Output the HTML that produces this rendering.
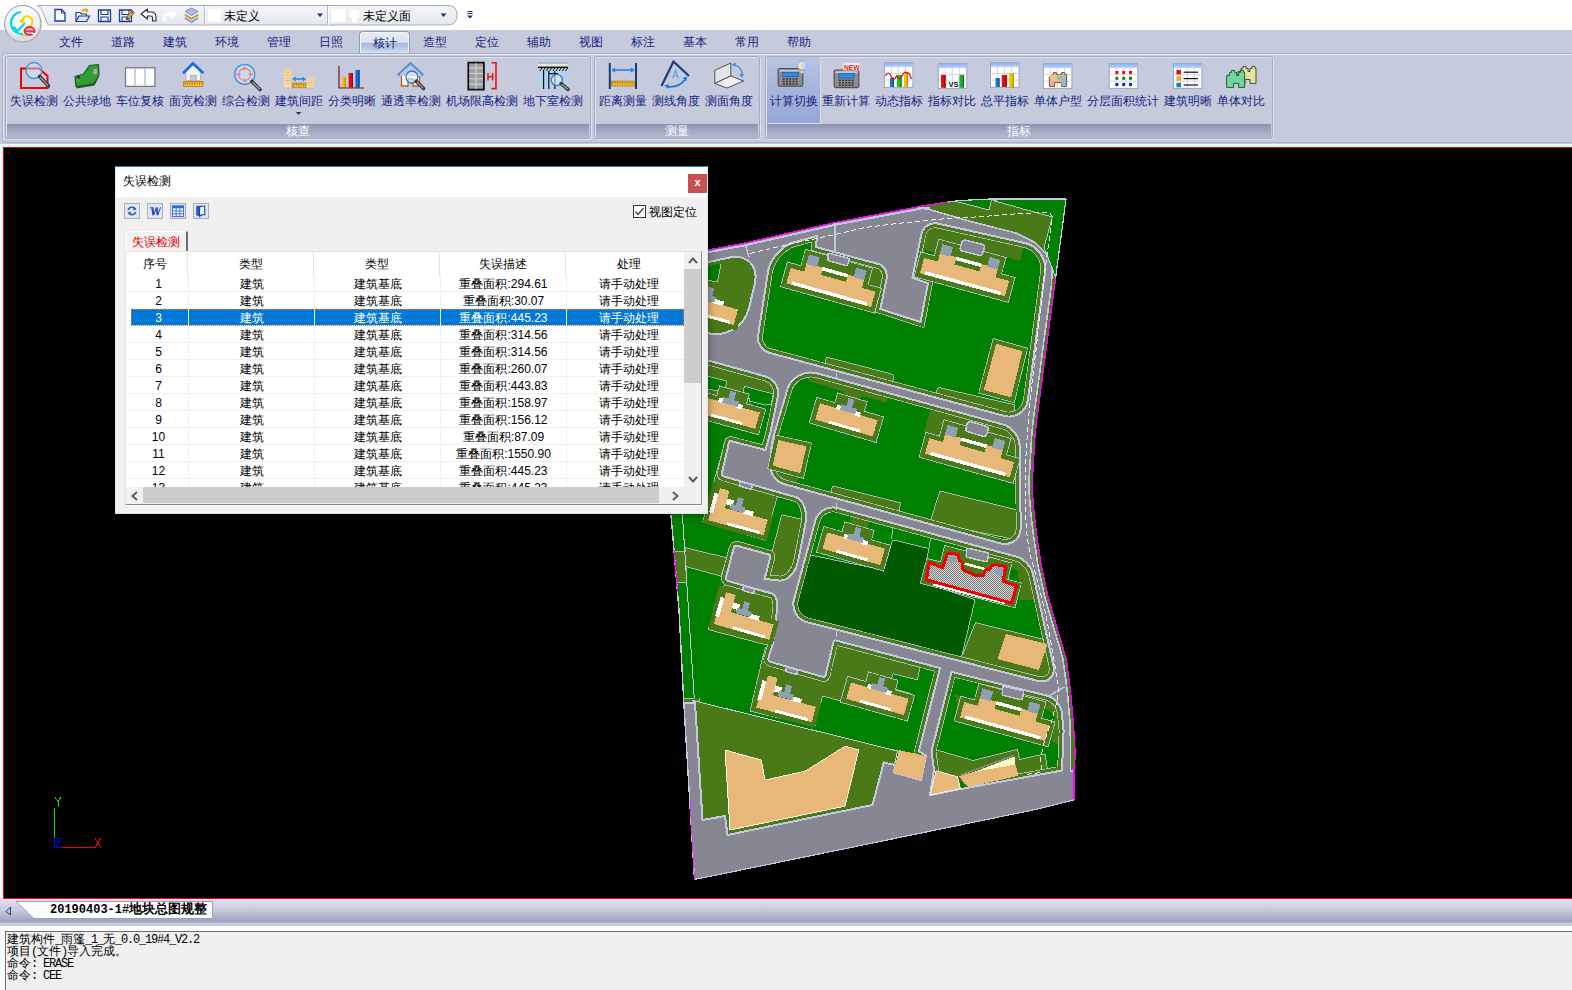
<!DOCTYPE html>
<html lang="zh">
<head>
<meta charset="utf-8">
<title>失误检测</title>
<style>
*{box-sizing:border-box;margin:0;padding:0}
html,body{width:1572px;height:990px;overflow:hidden;background:#fff}
body{font-family:"Liberation Sans",sans-serif;font-size:12px;color:#000;position:relative}
.abs{position:absolute}
/* top */
#titlebar{left:0;top:0;width:1572px;height:30px;background:#fff}
#tabrow{left:0;top:30px;width:1572px;height:23px;background:#c5cbdd}
#ribbon{left:0;top:53px;width:1572px;height:91px;background:#c5cbdd}
#ribbon-frame{left:2px;top:53px;width:1570px;height:90px;border:1px solid #aab0c4;border-right:none;border-radius:4px 0 0 4px;box-shadow:inset 1px 1px 0 #e3e6f0}
#ribbon-bottom{left:0;top:144px;width:1572px;height:2px;background:#f4f5f9}
.tab{position:absolute;top:31px;height:22px;width:52px;text-align:center;line-height:22px;font-size:12px;color:#141e7c}
.tab.on{border:1px solid #8e9cc0;border-bottom:none;border-radius:4px 4px 0 0;background:linear-gradient(#e6ebf5 0%,#dde3f0 48%,#a8b7da 54%,#b9cde8 80%,#cde3f3 100%);width:51px;box-shadow:inset 1px 1px 0 #f3f5fb,inset -1px 0 0 #f3f5fb}
.grp{position:absolute;top:56px;height:83px;border:1px solid #a6adc3;border-radius:3px;box-shadow:inset 1px 1px 0 #dde1ed,1px 1px 0 #dde1ed}
.grp .ttl{position:absolute;left:1px;right:1px;bottom:0;height:14px;background:linear-gradient(#8a94b2,#a3abc5 55%,#b4bbd0);color:#fff;font-size:12px;line-height:14px;text-align:center}
.btn{position:absolute;top:1px;height:66px;text-align:center;color:#141e7c;font-size:12px}
.btn svg{position:absolute;left:50%;top:3px;margin-left:-17px;width:34px;height:34px}
.btn span{position:absolute;left:-19px;right:-21px;top:36px;line-height:14px;white-space:nowrap}
.btn.hot{background:linear-gradient(#b8c3e3,#95a7d5);box-shadow:1px 1px 0 #d4dbef}
/* canvas */
#canvas{left:2px;top:146px;width:1570px;height:754px;background:#000;border:1px solid #fff;border-right:none}
#canvas-red{left:3px;top:147px;width:1569px;height:752px;border:1px solid #f00;border-right:none}
/* bottom */
#docstrip{left:0;top:900px;width:1572px;height:22px;background:linear-gradient(#dfe1ee,#c8cadd 45%,#9c9fbc)}
#docstrip2{left:0;top:922px;width:1572px;height:4px;background:#c5cbdd;border-top:1px solid #b3b8cc}
#gap{left:0;top:926px;width:1572px;height:5px;background:#fff}
#cmdbg{left:0;top:931px;width:6px;height:59px;background:#fafafa}#cmd{left:5px;top:931px;width:1567px;height:59px;background:#f0f0f0;border-top:1px solid #6e6e6e;border-left:1px solid #6e6e6e}
#cmd div{position:absolute;left:1px;font-family:"Liberation Mono",monospace;font-size:12px;line-height:12px;white-space:pre}#cmd .a{letter-spacing:-1.2px}
/* dialog */
#dlg{left:115px;top:166px;width:593px;height:348px;background:#f0f0f0;border:1px solid #e2e2e2;border-top:1px solid #1883d7;box-shadow:0 1px 9px rgba(0,0,0,.45)}
#dlg-title{left:0;top:0;width:591px;height:30px;background:#fff;font-size:12px;line-height:29px;padding-left:7px}
#dlg-x{left:572px;top:7px;width:19px;height:19px;background:#c75050;color:#fff;font-size:11px;font-weight:bold;line-height:17px;text-align:center}
.tb{position:absolute;top:36px;width:16px;height:16px;background:#dfe6f4;border:1px solid #adadad}.tb svg{position:absolute;left:0;top:0}
#list{left:9px;top:84px;width:577px;height:254px;background:#fff;border:1px solid #828790;border-left-color:#e3e3e3;border-top-color:#e3e3e3;overflow:hidden;box-shadow:1px 1px 0 #fff}
.row{position:absolute;left:0;width:558px;height:17px;border-bottom:1px solid #f0f0f0;font-size:12px;line-height:19px}
.row i{position:absolute;top:0;font-style:normal;text-align:center;height:17px}
.row.sel{background:#0078d7;color:#fff;left:5px;width:553px;outline:1px dotted #e08020;outline-offset:-1px}
</style>
</head>
<body>
<div id="titlebar" class="abs"></div>
<div id="tabrow" class="abs"></div>
<div id="ribbon" class="abs"></div>
<div id="ribbon-frame" class="abs"></div>
<div id="ribbon-bottom" class="abs"></div>
<svg class="abs" style="left:0;top:0" width="490" height="50" viewBox="0 0 490 50">
<defs><linearGradient id="qg" x1="0" y1="0" x2="0" y2="1"><stop offset="0" stop-color="#f4f5f9"/><stop offset="1" stop-color="#e6e8f0"/></linearGradient><radialGradient id="ab" cx=".45" cy=".3" r=".8"><stop offset="0" stop-color="#ffffff"/><stop offset=".6" stop-color="#f2f2f4"/><stop offset="1" stop-color="#c9c9d2"/></radialGradient></defs>
<path d="M37 5.5 H448 Q457 5.5 457 15.2 Q457 25 448 25 H48 Q45 18 42 10 Q40 6 37 5.5Z" fill="url(#qg)" stroke="#a7abbb" stroke-width="1"/>
<circle cx="23" cy="24" r="19" fill="#b9bccb" opacity=".55"/>
<circle cx="22.8" cy="23.6" r="18.2" fill="url(#ab)" stroke="#9a9aa6" stroke-width="1"/>
<path d="M5.5 27 A17.5 17.5 0 0 0 40 27 A17.5 12 0 0 1 5.5 27Z" fill="#dcdce4" opacity=".8"/>
<path d="M21 12 A11 11 0 1 0 23 34" fill="none" stroke="#00d8e8" stroke-width="2.2"/>
<path d="M13.5 26.5 L17.5 31 L25 23" fill="none" stroke="#00d8e8" stroke-width="2.2"/>
<path d="M22.5 20 C24 15.5 29 15 31.5 18.5 C33.5 22 32 26 29 27.5" fill="none" stroke="#f0d800" stroke-width="2"/>
<path d="M18.5 21 L24.5 17.5 L24.5 24.5Z" fill="#f0d800"/>
<path d="M21 35.5 H28" stroke="#e0c800" stroke-width="1.4"/>
<ellipse cx="29.5" cy="31" rx="5" ry="4" fill="#f4c0c8" stroke="#e03050" stroke-width="2"/><path d="M25 31.3 H34" stroke="#e03050" stroke-width="1.6"/><path d="M31 33 L36 33 L35 36Z" fill="#f2f2f4"/>
<path d="M55 9.5 H61.5 L65 13 V21 H55Z" fill="#f6f8fd" stroke="#1c3f94" stroke-width="1.3"/><path d="M61.5 9.5 V13 H65" fill="none" stroke="#1c3f94" stroke-width="1"/>
<path d="M76 21.5 V12.5 H80 L81.5 14 H86.5 V16" fill="#f0f4fc" stroke="#1c3f94" stroke-width="1.2"/><path d="M76 21.5 L79 16 H89.5 L86.5 21.5Z" fill="#dfe8f8" stroke="#1c3f94" stroke-width="1.2"/><path d="M82 11.5 Q85 8 88 10.5" fill="none" stroke="#e8a000" stroke-width="1.6"/><path d="M86 9 L89 11.5 L85.5 12.5Z" fill="#e8a000"/>
<path d="M98.5 10 H110.5 V21.5 H98.5Z" fill="#f4f7fd" stroke="#1c3f94" stroke-width="1.3"/><path d="M101.0 10 V14.5 H108.0 V10" fill="none" stroke="#1c3f94" stroke-width="1.1"/><path d="M101.0 21.5 V17 H108.0 V21.5" fill="none" stroke="#1c3f94" stroke-width="1.1"/>
<path d="M119.5 10 H131.5 V21.5 H119.5Z" fill="#f4f7fd" stroke="#1c3f94" stroke-width="1.3"/><path d="M122.0 10 V14.5 H129.0 V10" fill="none" stroke="#1c3f94" stroke-width="1.1"/><path d="M122.0 21.5 V17 H129.0 V21.5" fill="none" stroke="#1c3f94" stroke-width="1.1"/>
<path d="M126 20 L127 16.5 L132.5 10.5 L134.5 12.5 L129 18.5Z" fill="#f0b020" stroke="#7a4a10" stroke-width=".7"/><path d="M126 20 L127 17 L128.8 18.6Z" fill="#333"/><path d="M131.5 11.5 L133.5 13.5" stroke="#c03030" stroke-width="1.2"/>
<path d="M141 14 L147.5 9 V12 H151 Q156 12 156 17 V21 H152.5 V18 Q152.5 16 150.5 16 H147.5 V19Z" fill="#fff" stroke="#2a2a2a" stroke-width="1.1" stroke-linejoin="round"/>
<path d="M177.5 14 L171 9 V12 H167.5 Q162.5 12 162.5 17 V21 H166 V18 Q166 16 168 16 H171 V19Z" fill="#fdfdfe" stroke="#f4f5f9" stroke-width="1" stroke-linejoin="round"/>
<path d="M191.5 8 L198 11.5 L191.5 15.5 L185 11.5Z" fill="#a8c0e8" stroke="#5f7fb8" stroke-width=".8"/>
<path d="M185 14.2 L191.5 18 L198 14.2 L198 15.5 L191.5 19.6 L185 15.5Z" fill="#e8a030" stroke="#b87818" stroke-width=".6"/>
<path d="M185 17.6 L191.5 21.4 L198 17.6 L198 18.6 L191.5 22.8 L185 18.6Z" fill="#8aa4d8" stroke="#5f7fb8" stroke-width=".6"/>
<path d="M204.5 6 V25 M327.5 6 V25" stroke="#b4b8c8" stroke-width="1"/><path d="M205.5 6 V25 M328.5 6 V25" stroke="#fff" stroke-width="1"/>
<rect x="208" y="9" width="12.5" height="13" fill="#fff"/><rect x="331.5" y="9" width="14" height="13" fill="#fff"/>
<path d="M354.5 9 A5 5 0 0 1 357 18.5 V22 H352 V18.5 A5 5 0 0 1 354.5 9Z" fill="#fff"/>
<path d="M317 13.5 H323 L320 17Z" fill="#1c2f80"/><path d="M440.5 13.5 H446.5 L443.5 17Z" fill="#1c2f80"/>
<path d="M467.5 11.5 H472.5 M467.5 13.5 H472.5" stroke="#1c2f80" stroke-width="1"/><path d="M467 15.5 H473 L470 18.5Z" fill="#1c2f80"/>
</svg>
<div class="abs" style="left:224px;top:8px;font-size:12px;line-height:16px">未定义</div>
<div class="abs" style="left:363px;top:8px;font-size:12px;line-height:16px">未定义面</div>
<div class="tab" style="left:45px">文件</div>
<div class="tab" style="left:97px">道路</div>
<div class="tab" style="left:149px">建筑</div>
<div class="tab" style="left:201px">环境</div>
<div class="tab" style="left:253px">管理</div>
<div class="tab" style="left:305px">日照</div>
<div class="tab on" style="left:359px">核计</div>
<div class="tab" style="left:409px">造型</div>
<div class="tab" style="left:461px">定位</div>
<div class="tab" style="left:513px">辅助</div>
<div class="tab" style="left:565px">视图</div>
<div class="tab" style="left:617px">标注</div>
<div class="tab" style="left:669px">基本</div>
<div class="tab" style="left:721px">常用</div>
<div class="tab" style="left:773px">帮助</div>
<div class="grp" style="left:5px;width:586px">
<div class="btn" style="left:2px;width:50px"><svg viewBox="0 0 34 34"></svg><span>失误检测</span></div>
<div class="btn" style="left:55px;width:50px"><svg viewBox="0 0 34 34"></svg><span>公共绿地</span></div>
<div class="btn" style="left:108px;width:50px"><svg viewBox="0 0 34 34"></svg><span>车位复核</span></div>
<div class="btn" style="left:161px;width:50px"><svg viewBox="0 0 34 34"></svg><span>面宽检测</span></div>
<div class="btn" style="left:214px;width:50px"><svg viewBox="0 0 34 34"></svg><span>综合检测</span></div>
<div class="btn" style="left:267px;width:50px"><svg viewBox="0 0 34 34"></svg><span>建筑间距</span></div>
<div class="btn" style="left:320px;width:50px"><svg viewBox="0 0 34 34"></svg><span>分类明晰</span></div>
<div class="btn" style="left:379px;width:50px"><svg viewBox="0 0 34 34"></svg><span>通透率检测</span></div>
<div class="btn" style="left:450px;width:50px"><svg viewBox="0 0 34 34"></svg><span>机场限高检测</span></div>
<div class="btn" style="left:521px;width:50px"><svg viewBox="0 0 34 34"></svg><span>地下室检测</span></div>
<div class="ttl">核查</div></div>
<div class="grp" style="left:594px;width:166px">
<div class="btn" style="left:2px;width:50px"><svg viewBox="0 0 34 34"></svg><span>距离测量</span></div>
<div class="btn" style="left:55px;width:50px"><svg viewBox="0 0 34 34"></svg><span>测线角度</span></div>
<div class="btn" style="left:108px;width:50px"><svg viewBox="0 0 34 34"></svg><span>测面角度</span></div>
<div class="ttl">测量</div></div>
<div class="grp" style="left:765px;width:508px">
<div class="btn hot" style="left:1.3000000000000007px;width:52.4px;top:0;height:65.5px"><span style="top:36.5px;left:-18px;right:-20px">计算切换</span></div>
<div class="btn" style="left:54px;width:50px"><svg viewBox="0 0 34 34"></svg><span>重新计算</span></div>
<div class="btn" style="left:107px;width:50px"><svg viewBox="0 0 34 34"></svg><span>动态指标</span></div>
<div class="btn" style="left:160px;width:50px"><svg viewBox="0 0 34 34"></svg><span>指标对比</span></div>
<div class="btn" style="left:213px;width:50px"><svg viewBox="0 0 34 34"></svg><span>总平指标</span></div>
<div class="btn" style="left:266px;width:50px"><svg viewBox="0 0 34 34"></svg><span>单体户型</span></div>
<div class="btn" style="left:331px;width:50px"><svg viewBox="0 0 34 34"></svg><span>分层面积统计</span></div>
<div class="btn" style="left:396px;width:50px"><svg viewBox="0 0 34 34"></svg><span>建筑明晰</span></div>
<div class="btn" style="left:449px;width:50px"><svg viewBox="0 0 34 34"></svg><span>单体对比</span></div>
<div class="ttl">指标</div></div>
<svg class="abs" style="left:0;top:56px" width="1280" height="62" viewBox="0 56 1280 62">
<defs><linearGradient id="thd" x1="0" y1="0" x2="0" y2="1"><stop offset="0" stop-color="#86aef2"/><stop offset="1" stop-color="#c4d6fa"/></linearGradient></defs>
<path d="M21 68.5 H39 L47.5 76 V88 H21Z" fill="none" stroke="#f00000" stroke-width="2"/><circle cx="34" cy="70.5" r="8" fill="rgba(215,232,250,.45)" stroke="#3f8fd8" stroke-width="1.3"/><path d="M39.5 76.3 L48.5 86" stroke="#3a3a3a" stroke-width="3.6" stroke-linecap="round"/><path d="M40.5 77.4 L47.8 85.3" stroke="#a8a8a8" stroke-width="1.2" stroke-linecap="round"/>
<path d="M75 76.5 L83.5 74 L89.5 65.5 L98.5 64.5 L99 75 L94 83.5 L76 86.5 Z" fill="#2f9c34" stroke="#1c5c20" stroke-width="1.2" stroke-linejoin="round"/><path d="M76 86.5 L94 83.5 L99 75 L99 77 L94.5 85.5 L76.5 88.5Z" fill="#1c5c20"/><rect x="93.5" y="69" width="3.6" height="5.4" fill="#b8b0b8" stroke="#7a7a7a" stroke-width=".5" transform="rotate(4 95 71)"/><rect x="77.2" y="76.2" width="2.4" height="2.4" fill="#222"/><rect x="77.8" y="78.6" width="1.2" height="3" fill="#b89040"/>
<rect x="125.5" y="67.8" width="29.4" height="18.6" fill="#fff" stroke="#7c7c80" stroke-width="1.3"/><path d="M135 68 V86 M145 68 V86" stroke="#b4b4bc" stroke-width="1.2"/>
<path d="M186 72 V80.5 H200.5 V72 L193 65Z" fill="#f4f4f6" stroke="#b0b0b8" stroke-width=".8"/><rect x="190.2" y="75.4" width="6" height="5.6" fill="#c4cbdd" stroke="#9a9aa6" stroke-width=".6"/><path d="M183 73.2 L193 63.4 L203.4 73.2" fill="none" stroke="#1c6cec" stroke-width="2.6" stroke-linejoin="miter"/><rect x="183.6" y="81.6" width="19.4" height="4.8" fill="#f2b830" stroke="#b88010" stroke-width=".8"/><path d="M185.1 82.1 v2.6M187.5 82.1 v1.8M189.9 82.1 v2.6M192.3 82.1 v1.8M194.7 82.1 v2.6M197.1 82.1 v1.8M199.5 82.1 v2.6M201.9 82.1 v1.8" stroke="#805000" stroke-width=".6"/>
<circle cx="244.7" cy="74.4" r="10" fill="rgba(215,232,250,.45)" stroke="#3f8fd8" stroke-width="1.3"/><path d="M251.8 81.4 L260 89.5" stroke="#3a3a3a" stroke-width="3.6" stroke-linecap="round"/><path d="M252.9 82.5 L259.3 88.8" stroke="#a8a8a8" stroke-width="1.2" stroke-linecap="round"/><circle cx="244.7" cy="74.4" r="6" fill="none" stroke="#f07878" stroke-width="1.1"/><path d="M244.7 66 v4.4 M244.7 78.4 v4.4 M236.3 74.4 h4.4 M248.7 74.4 h4.4" stroke="#f07878" stroke-width="1.1"/>
<rect x="283.6" y="68.4" width="8" height="19.6" fill="#f8dca8" stroke="#c8c8d8" stroke-width="1"/><path d="M285 70.5 h5 M285 73 h5 M285 75.5 h5 M285 78 h5 M285 80.5 h5 M285 83 h5" stroke="#e8b868" stroke-width="1"/><rect x="306.6" y="77.6" width="8" height="10.4" fill="#f8dca8" stroke="#c8c8d8" stroke-width="1"/><path d="M308 80 h5 M308 82.5 h5 M308 85 h5" stroke="#e8b868" stroke-width="1"/><path d="M293.5 79 H305" stroke="#1e8ae8" stroke-width="1.6"/><path d="M292.4 79 l3.4 -2.6 v5.2Z M306 79 l-3.4 -2.6 v5.2Z" fill="#1e8ae8"/><rect x="292.6" y="83.2" width="13.4" height="4.4" fill="#f2b830" stroke="#b88010" stroke-width=".8"/><path d="M294.1 83.7 v2.6M296.5 83.7 v1.8M298.9 83.7 v2.6M301.3 83.7 v1.8M303.7 83.7 v2.6" stroke="#805000" stroke-width=".6"/><path d="M283 88.4 H315" stroke="#c0c0cc" stroke-width="1"/>
<path d="M295.8 112 h5.6 l-2.8 2.8Z" fill="#1c2f80"/>
<rect x="342" y="77" width="3.8" height="10.599999999999994" fill="#f4c000"/><rect x="344.6" y="77" width="1.2" height="10.599999999999994" fill="#c89000"/><rect x="348.6" y="73" width="4.4" height="14.599999999999994" fill="#e01010"/><rect x="351.8" y="73" width="1.2" height="14.599999999999994" fill="#a00808"/><rect x="355.4" y="70" width="4.2" height="17.599999999999994" fill="#1c6cd0"/><rect x="358.4" y="70" width="1.2" height="17.599999999999994" fill="#104890"/><path d="M339 66 V88 H364" fill="none" stroke="#7a1818" stroke-width="1.2"/>
<path d="M401.5 76 V86 H408 V79 H413 V86 H419.5 V76" fill="#fdf6ee" stroke="#b06828" stroke-width="1.3"/><path d="M398 75.4 L410.5 63.8 L423 75.4" fill="none" stroke="#5a8cd4" stroke-width="3"/><path d="M399.6 75 L410.5 65.2 L421.4 75" fill="none" stroke="#cfe0f6" stroke-width="1"/><circle cx="411.9" cy="77" r="6" fill="rgba(225,238,252,.6)" stroke="#3a78c8" stroke-width="1.3"/><path d="M416.2 81.2 L423.6 88.6" stroke="#3a3a3a" stroke-width="3.6" stroke-linecap="round"/><path d="M417.2 82.3 L422.9 87.9" stroke="#a8a8a8" stroke-width="1.2" stroke-linecap="round"/>
<rect x="468.3" y="62.6" width="15.6" height="27" fill="#a0a0a4" stroke="#141414" stroke-width="1.8"/><path d="M476 63 V89 M469 68 H483 M469 73.4 H483 M469 78.8 H483 M469 84.2 H483" stroke="#d4d4d8" stroke-width="1"/><path d="M491.5 62.8 H496 V88.6 H491.5" fill="none" stroke="#f01010" stroke-width="1.6"/><path d="M488 73 V80.4 M492.6 73 V80.4 M488 76.7 H492.6" stroke="#f01010" stroke-width="1.5"/>
<rect x="538" y="68" width="30" height="21" fill="#b4d2ec"/><rect x="538" y="63" width="30" height="2.6" fill="#f4f0d0"/><path d="M538 63 H568" stroke="#70a0d0" stroke-width="1"/><path d="M538 67.4 H568" stroke="#101010" stroke-width="1.4"/><path d="M540.0 71 l2.2 -3.4M543.2 71 l2.2 -3.4M546.4 71 l2.2 -3.4M549.6 71 l2.2 -3.4M552.8 71 l2.2 -3.4M556.0 71 l2.2 -3.4M559.2 71 l2.2 -3.4M562.4 71 l2.2 -3.4M565.6 71 l2.2 -3.4" stroke="#101010" stroke-width="1"/><path d="M543.6 71 V89 M548.8 71 V89 M554.8 71 V89 M548.8 73.6 H558" stroke="#101010" stroke-width="1.2" fill="none"/><circle cx="556.8" cy="80" r="5.6" fill="rgba(230,240,252,.55)" stroke="#3a78c8" stroke-width="1.3"/><path d="M561.1 83.6 L568 89.4" stroke="#3a3a3a" stroke-width="3.6" stroke-linecap="round"/><path d="M562.2 84.6 L567.2 88.8" stroke="#a8a8a8" stroke-width="1.2" stroke-linecap="round"/>
<path d="M609.8 63 V89 M636 63 V89" stroke="#1c3a78" stroke-width="2"/><path d="M613 70 H633" stroke="#1e8ae8" stroke-width="1.6"/><path d="M611.2 70 l4 -2.8 v5.6Z M634.8 70 l-4 -2.8 v5.6Z" fill="#1e8ae8"/><rect x="611.4" y="81.2" width="23.2" height="4.8" fill="#f2b830" stroke="#b88010" stroke-width=".8"/><path d="M612.9 81.7 v2.6M615.3 81.7 v1.8M617.7 81.7 v2.6M620.1 81.7 v1.8M622.5 81.7 v2.6M624.9 81.7 v1.8M627.3 81.7 v2.6M629.7 81.7 v1.8M632.1 81.7 v2.6" stroke="#805000" stroke-width=".6"/>
<path d="M661.5 86 L673.5 61.5 L689 76" fill="none" stroke="#1c3a78" stroke-width="2.2" stroke-linejoin="miter"/><path d="M672.8 78.5 L675.6 70 L678.4 78.5 M673.8 75.6 H677.4" fill="none" stroke="#58a8f0" stroke-width="1.2"/><path d="M667 86.6 Q679 88 685 79.4" fill="none" stroke="#1c78e0" stroke-width="1.8"/><path d="M664 85.4 l5 -1.2 l-1 4.6Z M687.4 76.4 l-5 1.4 l3.8 3.4Z" fill="#1c78e0"/>
<path d="M714.8 70.4 L730.8 63 V76 L714.8 83.4Z" fill="#e4e4e8" stroke="#505058" stroke-width="1"/><path d="M714.8 83.4 L730.8 76 L743.6 81 L727 88Z" fill="#f0f0f2" stroke="#505058" stroke-width="1"/><path d="M734 64.6 Q742.4 67 742 75" fill="none" stroke="#4a8ae0" stroke-width="1.5"/><path d="M731.6 64.2 l4.4 -1.8 l-.6 4.6Z M742 78 l-2.6 -3.8 l4.8 -.4Z" fill="#4a8ae0"/>
<rect x="778.2" y="68.6" width="24.6" height="17.6" rx="1.5" fill="#8e8e90" stroke="#505050" stroke-width="1.2"/><rect x="779.4000000000001" y="69.8" width="22.2" height="2" fill="#c8c8c8"/><rect x="782.7" y="72.19999999999999" width="15.5" height="4.4" fill="#2a8cec" stroke="#1a4a98" stroke-width=".6"/><rect x="782.8" y="78.2" width="2" height="1.5" fill="#303030"/><rect x="786.0" y="78.2" width="2" height="1.5" fill="#303030"/><rect x="789.2" y="78.2" width="2" height="1.5" fill="#303030"/><rect x="792.4" y="78.2" width="2" height="1.5" fill="#303030"/><rect x="795.6" y="78.2" width="2" height="1.5" fill="#303030"/><rect x="782.8" y="80.7" width="2" height="1.5" fill="#303030"/><rect x="786.0" y="80.7" width="2" height="1.5" fill="#303030"/><rect x="789.2" y="80.7" width="2" height="1.5" fill="#303030"/><rect x="792.4" y="80.7" width="2" height="1.5" fill="#303030"/><rect x="795.6" y="80.7" width="2" height="1.5" fill="#303030"/><rect x="782.8" y="83.2" width="2" height="1.5" fill="#303030"/><rect x="786.0" y="83.2" width="2" height="1.5" fill="#303030"/><rect x="789.2" y="83.2" width="2" height="1.5" fill="#303030"/><rect x="792.4" y="83.2" width="2" height="1.5" fill="#303030"/><rect x="795.6" y="83.2" width="2" height="1.5" fill="#303030"/><circle cx="802" cy="65.6" r="4.6" fill="#f6e8a0" stroke="#7aa8e0" stroke-width="1"/><path d="M802 61 A4.6 4.6 0 0 1 802 70.2Z" fill="#bcd6f6"/><rect x="800" y="70" width="4" height="3.4" fill="#d8d8dc" stroke="#808088" stroke-width=".6"/>
<rect x="834.2" y="70" width="24.6" height="17.6" rx="1.5" fill="#8e8e90" stroke="#505050" stroke-width="1.2"/><rect x="835.4000000000001" y="71.2" width="22.2" height="2" fill="#c8c8c8"/><rect x="838.7" y="73.6" width="15.5" height="4.4" fill="#2a8cec" stroke="#1a4a98" stroke-width=".6"/><rect x="838.8" y="79.6" width="2" height="1.5" fill="#303030"/><rect x="842.0" y="79.6" width="2" height="1.5" fill="#303030"/><rect x="845.2" y="79.6" width="2" height="1.5" fill="#303030"/><rect x="848.4" y="79.6" width="2" height="1.5" fill="#303030"/><rect x="851.6" y="79.6" width="2" height="1.5" fill="#303030"/><rect x="838.8" y="82.1" width="2" height="1.5" fill="#303030"/><rect x="842.0" y="82.1" width="2" height="1.5" fill="#303030"/><rect x="845.2" y="82.1" width="2" height="1.5" fill="#303030"/><rect x="848.4" y="82.1" width="2" height="1.5" fill="#303030"/><rect x="851.6" y="82.1" width="2" height="1.5" fill="#303030"/><rect x="838.8" y="84.6" width="2" height="1.5" fill="#303030"/><rect x="842.0" y="84.6" width="2" height="1.5" fill="#303030"/><rect x="845.2" y="84.6" width="2" height="1.5" fill="#303030"/><rect x="848.4" y="84.6" width="2" height="1.5" fill="#303030"/><rect x="851.6" y="84.6" width="2" height="1.5" fill="#303030"/><rect x="843.4" y="63.4" width="16.6" height="7" fill="#fff"/><text x="844" y="69.8" font-family="Liberation Sans,sans-serif" font-weight="bold" font-size="7.4" fill="#e81010" textLength="15.6" lengthAdjust="spacingAndGlyphs">NEW</text>
<rect x="884.4" y="62.6" width="28.5" height="24.8" fill="#fff" stroke="#98a4c0" stroke-width="1"/><rect x="884.9" y="63.1" width="27.5" height="4" fill="url(#thd)"/><path d="M891.4 67.1 V87.4 M898.4 67.1 V87.4 M905.4 67.1 V87.4 M884.4 73.6 H912.9 M884.4 80.1 H912.9" stroke="#d0d6e6" stroke-width="1" fill="none"/><rect x="890" y="77.6" width="4" height="9.400000000000006" fill="#1c78d0"/><rect x="892.8" y="77.6" width="1.2" height="9.400000000000006" fill="#104890"/><rect x="897" y="75" width="4.6" height="12" fill="#20c020"/><rect x="900.4" y="75" width="1.2" height="12" fill="#108010"/><rect x="904" y="73" width="4" height="14" fill="#f4c000"/><rect x="906.8" y="73" width="1.2" height="14" fill="#b88800"/><path d="M885.5 76 Q888 70 891 76 T896.5 76 Q899 82 902 76 T906 73 Q909 71 911.5 79" fill="none" stroke="#e81010" stroke-width="1.2"/>
<rect x="938.3" y="63.6" width="28.5" height="24.8" fill="#fff" stroke="#98a4c0" stroke-width="1"/><rect x="938.8" y="64.1" width="27.5" height="4" fill="url(#thd)"/><path d="M945.3 68.1 V88.4 M952.3 68.1 V88.4 M959.3 68.1 V88.4 M938.3 74.6 H966.8 M938.3 81.1 H966.8" stroke="#d0d6e6" stroke-width="1" fill="none"/><rect x="941" y="75" width="4.6" height="12.799999999999997" fill="#e01010"/><rect x="944.4" y="75" width="1.2" height="12.799999999999997" fill="#980808"/><rect x="959.4" y="75" width="4.6" height="12.799999999999997" fill="#20b030"/><rect x="962.8" y="75" width="1.2" height="12.799999999999997" fill="#107018"/><text x="948.6" y="87.4" font-family="Liberation Sans,sans-serif" font-weight="bold" font-size="8" fill="#111" textLength="10" lengthAdjust="spacingAndGlyphs">VS</text>
<rect x="990.5" y="62.6" width="28.5" height="24.8" fill="#fff" stroke="#98a4c0" stroke-width="1"/><rect x="991.0" y="63.1" width="27.5" height="4" fill="url(#thd)"/><path d="M997.5 67.1 V87.4 M1004.5 67.1 V87.4 M1011.5 67.1 V87.4 M990.5 73.6 H1019.0 M990.5 80.1 H1019.0" stroke="#d0d6e6" stroke-width="1" fill="none"/><rect x="995.5" y="78" width="4" height="9" fill="#1c78d0"/><rect x="998.3" y="78" width="1.2" height="9" fill="#104890"/><rect x="1001.8" y="75" width="5" height="12" fill="#e01010"/><rect x="1005.5999999999999" y="75" width="1.2" height="12" fill="#980808"/><rect x="1009.2" y="73" width="4.6" height="14" fill="#f4c000"/><rect x="1012.6" y="73" width="1.2" height="14" fill="#b88800"/>
<rect x="1043.4" y="63.6" width="28.5" height="24.8" fill="#fff" stroke="#98a4c0" stroke-width="1"/><rect x="1043.9" y="64.1" width="27.5" height="4" fill="url(#thd)"/><path d="M1050.4 68.1 V88.4 M1057.4 68.1 V88.4 M1064.4 68.1 V88.4 M1043.4 74.6 H1071.9 M1043.4 81.1 H1071.9" stroke="#d0d6e6" stroke-width="1" fill="none"/><path d="M1049.4 77 H1052 V74.4 H1053.6 V72.6 H1056.4 V74.4 H1058.4 V77 H1060 V74.4 H1061.6 V72.6 H1064.6 V74.4 H1066.6 V86.4 H1061.4 V82.6 H1054.6 V86.4 H1049.4Z" fill="#e8b0a0" stroke="#7a5030" stroke-width="1"/><rect x="1050" y="74.6" width="7" height="5" fill="#e8c890"/><rect x="1057" y="75" width="5" height="5" fill="#98c888"/><rect x="1061.6" y="76" width="4.4" height="10" fill="#98b8d8"/>
<rect x="1109.3" y="63.6" width="28.5" height="24.8" fill="#fff" stroke="#98a4c0" stroke-width="1"/><rect x="1109.8" y="64.1" width="27.5" height="4" fill="url(#thd)"/><path d="M1116.3 68.1 V88.4 M1123.3 68.1 V88.4 M1130.3 68.1 V88.4 M1109.3 74.6 H1137.8 M1109.3 81.1 H1137.8" stroke="#d0d6e6" stroke-width="1" fill="none"/><rect x="1115.4" y="71" width="3" height="3" fill="#f01010"/><rect x="1122.2" y="71" width="3" height="3" fill="#f01010"/><rect x="1129" y="71" width="3" height="3" fill="#f01010"/><rect x="1115.4" y="76.8" width="3" height="3" fill="#108a20"/><rect x="1122.2" y="76.8" width="3" height="3" fill="#108a20"/><rect x="1129" y="76.8" width="3" height="3" fill="#108a20"/><rect x="1115.4" y="83" width="3" height="3" fill="#1020f0"/><rect x="1122.2" y="83" width="3" height="3" fill="#1020f0"/><rect x="1129" y="83" width="3" height="3" fill="#1020f0"/>
<rect x="1173.4" y="63.6" width="28.5" height="24.8" fill="#fff" stroke="#98a4c0" stroke-width="1"/><rect x="1173.9" y="64.1" width="27.5" height="4" fill="url(#thd)"/><path d="M1180.4 68.1 V88.4 M1187.4 68.1 V88.4 M1194.4 68.1 V88.4 M1173.4 74.6 H1201.9 M1173.4 81.1 H1201.9" stroke="#d0d6e6" stroke-width="1" fill="none"/><rect x="1176.4" y="70" width="4.6" height="4.4" fill="#e01010"/><path d="M1183.6 72.2 H1198" stroke="#101010" stroke-width="1.2"/><rect x="1176.4" y="76.4" width="4.6" height="4.4" fill="#f0b010"/><path d="M1183.6 78.60000000000001 H1198" stroke="#101010" stroke-width="1.2"/><rect x="1176.4" y="82.8" width="4.6" height="4.4" fill="#1c78d0"/><path d="M1183.6 85.0 H1198" stroke="#101010" stroke-width="1.2"/>
<path d="M1238 71.4 H1241 V68.4 H1243 V66.4 H1246 V68.4 H1248 V71.4 H1250 V68.4  H1252 V66.4 H1255 V68.4 H1256 V83.4 H1250 V79.4 H1245 V83.4 H1238 Z" fill="#e4e4a0" stroke="#4a4a30" stroke-width="1" stroke-linejoin="miter"/><path d="M1226.6 75.4 H1229.6 V72.4 H1231.6 V70.4 H1234.6 V72.4 H1236.6 V75.4 H1238.6 V72.4  H1240.6 V70.4 H1243.6 V72.4 H1244.6 V87.4 H1238.6 V83.4 H1233.6 V87.4 H1226.6 Z" fill="#70d89c" stroke="#2a5a3a" stroke-width="1" stroke-linejoin="miter"/>
</svg>
<div id="canvas" class="abs"></div>
<div id="canvas-red" class="abs"></div>
<svg class="abs" style="left:0;top:0" width="1572" height="990" viewBox="0 0 1572 990" shape-rendering="crispEdges">
<defs><pattern id="hatch" width="2" height="2" patternUnits="userSpaceOnUse"><rect width="2" height="2" fill="#d8d8d8"/><rect width="1" height="1" fill="#7a7a7a"/><rect x="1" y="1" width="1" height="1" fill="#7a7a7a"/></pattern>
<clipPath id="csite"><polygon points="668,258 708,250 745,243 835,222.5 925,205.5 960,200.5 990,199 1066,199 1055,282.5 1046,350 1042,380.5 1036.6,421 1035,436 1032,487 1034,512 1036.7,535 1041.3,565.5 1047.9,596 1056.6,626.6 1062.6,646 1066.4,660 1070.5,690.5 1073.5,725 1075.5,759.5 1074.2,760 1074,800 1033,810 840,849.7 694.5,879.5 683.8,702.5 679,610 671,515"/></clipPath></defs>
<g clip-path="url(#csite)">
<polygon points="668,258 708,250 745,243 835,222.5 925,205.5 960,200.5 990,199 1066,199 1055,282.5 1046,350 1042,380.5 1036.6,421 1035,436 1032,487 1034,512 1036.7,535 1041.3,565.5 1047.9,596 1056.6,626.6 1062.6,646 1066.4,660 1070.5,690.5 1073.5,725 1075.5,759.5 1074.2,760 1074,800 1033,810 840,849.7 694.5,879.5 683.8,702.5 679,610 671,515" fill="#878793"/>
<polygon points="916,207.4 928.8,209.4 970,221.3 1016.5,233.2 1035.3,242.6 1046.6,253.9 1052.3,267.7 1051.4,285.2 1047.6,313.4 1042.7,350 1038.7,380.5 1033.1,421 1031.7,436 1028.7,487 1030.7,512 1033.4,535 1038,565.5 1044.6,596 1053.3,626.6 1059.3,646 1063.1,660 1067.2,690.5 1070.2,725 1070.7,771 1080,771 1080,190 916,190" fill="#4a7a18" stroke="#c6c8e0" stroke-width="1.6"/>
<polygon points="993.4,200.7 1006.5,198.1 1070,197 1055.4,277.7 1052.3,267.7 1046.6,253.9 1044.1,247.6 1052.3,217" fill="#008000" stroke="#c6c8e0" stroke-width="0.9"/>
<polygon points="955.8,201.3 976.4,198 992.1,198 989,210" fill="#008000" stroke="#c6c8e0" stroke-width="0.9"/>
<clipPath id="cA"><path d="M767.9 272.2C769.9 259.2 781.7 245.7 794.2 242.2L817 236L816 247L869 261.5L879 264.2C884.5 265.8 887.8 272.7 886.4 279.7L880.4 309L920.5 322L928 283.3L912.3 277.7L921.4 234.2C923 226.7 930.4 221.9 938 223.6L1024.8 243C1037.7 245.9 1046.8 259 1045 272.1L1027.9 399.7C1026.3 411.7 1015.4 418.9 1003.8 415.8L769.5 352.9C762.1 350.9 757 343.1 758.1 335.5Z"/></clipPath>
<g clip-path="url(#cA)"><path d="M767.9 272.2C769.9 259.2 781.7 245.7 794.2 242.2L817 236L816 247L869 261.5L879 264.2C884.5 265.8 887.8 272.7 886.4 279.7L880.4 309L920.5 322L928 283.3L912.3 277.7L921.4 234.2C923 226.7 930.4 221.9 938 223.6L1024.8 243C1037.7 245.9 1046.8 259 1045 272.1L1027.9 399.7C1026.3 411.7 1015.4 418.9 1003.8 415.8L769.5 352.9C762.1 350.9 757 343.1 758.1 335.5Z" fill="#008000"/>
<polygon points="826.4,357 893.4,374.5 892,390 824,372" fill="#4a7a18" stroke="#c6c8e0" stroke-width="0.8"/>
<polygon points="937.5,387.5 1015,405 1012,422 934,400" fill="#4a7a18" stroke="#c6c8e0" stroke-width="0.8"/>
<polygon points="869,255 895,262 885,300 862,300" fill="#4a7a18"/>
<polygon points="910,240 918,215 1030,238 1023.8,246 1020,261 1003.8,256.5 1001,268 925,250 918,292 900,288" fill="#4a7a18"/>
<path d="M767.9 272.2C769.9 259.2 781.7 245.7 794.2 242.2L817 236L816 247L869 261.5L879 264.2C884.5 265.8 887.8 272.7 886.4 279.7L880.4 309L920.5 322L928 283.3L912.3 277.7L921.4 234.2C923 226.7 930.4 221.9 938 223.6L1024.8 243C1037.7 245.9 1046.8 259 1045 272.1L1027.9 399.7C1026.3 411.7 1015.4 418.9 1003.8 415.8L769.5 352.9C762.1 350.9 757 343.1 758.1 335.5Z" fill="none" stroke="#c6c8e0" stroke-width="9.8" stroke-opacity=".8"/>
<path d="M767.9 272.2C769.9 259.2 781.7 245.7 794.2 242.2L817 236L816 247L869 261.5L879 264.2C884.5 265.8 887.8 272.7 886.4 279.7L880.4 309L920.5 322L928 283.3L912.3 277.7L921.4 234.2C923 226.7 930.4 221.9 938 223.6L1024.8 243C1037.7 245.9 1046.8 259 1045 272.1L1027.9 399.7C1026.3 411.7 1015.4 418.9 1003.8 415.8L769.5 352.9C762.1 350.9 757 343.1 758.1 335.5Z" fill="none" stroke="#4a7a18" stroke-width="8"/>
</g>
<path d="M767.9 272.2C769.9 259.2 781.7 245.7 794.2 242.2L817 236L816 247L869 261.5L879 264.2C884.5 265.8 887.8 272.7 886.4 279.7L880.4 309L920.5 322L928 283.3L912.3 277.7L921.4 234.2C923 226.7 930.4 221.9 938 223.6L1024.8 243C1037.7 245.9 1046.8 259 1045 272.1L1027.9 399.7C1026.3 411.7 1015.4 418.9 1003.8 415.8L769.5 352.9C762.1 350.9 757 343.1 758.1 335.5Z" fill="none" stroke="#c6c8e0" stroke-width="2"/>
<clipPath id="cC"><path d="M787.2 390C790.9 377.4 804.4 369.9 817.1 373.4L1003.1 424.5C1012.1 427 1019.6 436.6 1019.7 446L1020.7 527C1020.9 539.1 1011.5 546.4 999.8 543.2L784.4 484.2C775.9 481.9 769.5 472.8 770.1 464L771 451C771.3 446.6 772.5 439.5 773.8 435.3Z"/></clipPath>
<g clip-path="url(#cC)"><path d="M787.2 390C790.9 377.4 804.4 369.9 817.1 373.4L1003.1 424.5C1012.1 427 1019.6 436.6 1019.7 446L1020.7 527C1020.9 539.1 1011.5 546.4 999.8 543.2L784.4 484.2C775.9 481.9 769.5 472.8 770.1 464L771 451C771.3 446.6 772.5 439.5 773.8 435.3Z" fill="#008000"/>
<polygon points="940,491 1017,510 1017,540 930,522" fill="#4a7a18" stroke="#c6c8e0" stroke-width="0.8"/>
<polygon points="808,370 888,393 886.6,402.7 861.5,395.8 860.3,404 844,399.5 843.4,391.4 808,381" fill="#4a7a18"/>
<polygon points="931,407 1012,427 1024,450 1019,486 1011,478 1013,455 1000,445 945,425 940,436 924,432" fill="#4a7a18"/>
<polygon points="765,470 800,478 790,486 765,480" fill="#4a7a18"/>
<polygon points="832.5,486.2 900.5,503 898.8,512 830,497" fill="#4a7a18" stroke="#c6c8e0" stroke-width="0.8"/>
<path d="M787.2 390C790.9 377.4 804.4 369.9 817.1 373.4L1003.1 424.5C1012.1 427 1019.6 436.6 1019.7 446L1020.7 527C1020.9 539.1 1011.5 546.4 999.8 543.2L784.4 484.2C775.9 481.9 769.5 472.8 770.1 464L771 451C771.3 446.6 772.5 439.5 773.8 435.3Z" fill="none" stroke="#c6c8e0" stroke-width="9.8" stroke-opacity=".8"/>
<path d="M787.2 390C790.9 377.4 804.4 369.9 817.1 373.4L1003.1 424.5C1012.1 427 1019.6 436.6 1019.7 446L1020.7 527C1020.9 539.1 1011.5 546.4 999.8 543.2L784.4 484.2C775.9 481.9 769.5 472.8 770.1 464L771 451C771.3 446.6 772.5 439.5 773.8 435.3Z" fill="none" stroke="#4a7a18" stroke-width="8"/>
</g>
<path d="M787.2 390C790.9 377.4 804.4 369.9 817.1 373.4L1003.1 424.5C1012.1 427 1019.6 436.6 1019.7 446L1020.7 527C1020.9 539.1 1011.5 546.4 999.8 543.2L784.4 484.2C775.9 481.9 769.5 472.8 770.1 464L771 451C771.3 446.6 772.5 439.5 773.8 435.3Z" fill="none" stroke="#c6c8e0" stroke-width="2"/>
<clipPath id="cB"><path d="M815.3 520.8C817.9 511.2 827.8 505.5 837.4 508.1L1016.5 556.7C1023.9 558.7 1031.4 566.5 1033 574.1L1053.2 664.5C1055.8 676.3 1048.4 683.6 1036.7 680.6L807.4 622.3C797.3 619.7 791.2 609.3 794 599.3Z"/></clipPath>
<g clip-path="url(#cB)"><path d="M815.3 520.8C817.9 511.2 827.8 505.5 837.4 508.1L1016.5 556.7C1023.9 558.7 1031.4 566.5 1033 574.1L1053.2 664.5C1055.8 676.3 1048.4 683.6 1036.7 680.6L807.4 622.3C797.3 619.7 791.2 609.3 794 599.3Z" fill="#008000"/>
<polygon points="790,551 883.8,570 892.5,540 928.8,548.8 922.5,582.5 975,600 958,672 780,640" fill="#005a00" stroke="#c6c8e0" stroke-width="0.8"/>
<polygon points="975,622.5 1050,641 1070,700 950,672 962,655" fill="#4a7a18" stroke="#c6c8e0" stroke-width="0.8"/>
<polygon points="850.9,516 869.2,521 867.2,534.8 848.9,529.7" fill="#4a7a18"/>
<polyline points="893.6,522 891.6,538.9" fill="none" stroke="#c6c8e0" stroke-width="0.8"/>
<polyline points="931.6,533 928.8,548.8" fill="none" stroke="#c6c8e0" stroke-width="0.8"/>
<polygon points="970,541 1032,557 1040,600 1020,600 1018,570 985,560 968,552" fill="#4a7a18"/>
<path d="M815.3 520.8C817.9 511.2 827.8 505.5 837.4 508.1L1016.5 556.7C1023.9 558.7 1031.4 566.5 1033 574.1L1053.2 664.5C1055.8 676.3 1048.4 683.6 1036.7 680.6L807.4 622.3C797.3 619.7 791.2 609.3 794 599.3Z" fill="none" stroke="#c6c8e0" stroke-width="9.8" stroke-opacity=".8"/>
<path d="M815.3 520.8C817.9 511.2 827.8 505.5 837.4 508.1L1016.5 556.7C1023.9 558.7 1031.4 566.5 1033 574.1L1053.2 664.5C1055.8 676.3 1048.4 683.6 1036.7 680.6L807.4 622.3C797.3 619.7 791.2 609.3 794 599.3Z" fill="none" stroke="#4a7a18" stroke-width="8"/>
</g>
<path d="M815.3 520.8C817.9 511.2 827.8 505.5 837.4 508.1L1016.5 556.7C1023.9 558.7 1031.4 566.5 1033 574.1L1053.2 664.5C1055.8 676.3 1048.4 683.6 1036.7 680.6L807.4 622.3C797.3 619.7 791.2 609.3 794 599.3Z" fill="none" stroke="#c6c8e0" stroke-width="2"/>
<clipPath id="cTL"><path d="M660 273L727.9 257.8C747.2 253.5 759.2 265.7 754.5 285L749 308C744.6 326.1 726.1 337.5 707.9 333.2L660 322Z"/></clipPath>
<g clip-path="url(#cTL)"><path d="M660 273L727.9 257.8C747.2 253.5 759.2 265.7 754.5 285L749 308C744.6 326.1 726.1 337.5 707.9 333.2L660 322Z" fill="#008000"/>
<polygon points="660,240 770,240 770,345 660,345" fill="#4a7a18"/>
<polygon points="700,258 722,258 717.5,282 700,279" fill="#008000" stroke="#c6c8e0" stroke-width="0.8"/>
<path d="M660 273L727.9 257.8C747.2 253.5 759.2 265.7 754.5 285L749 308C744.6 326.1 726.1 337.5 707.9 333.2L660 322Z" fill="none" stroke="#4a7a18" stroke-width="8"/>
</g>
<path d="M660 273L727.9 257.8C747.2 253.5 759.2 265.7 754.5 285L749 308C744.6 326.1 726.1 337.5 707.9 333.2L660 322Z" fill="none" stroke="#c6c8e0" stroke-width="2"/>
<clipPath id="cL"><path d="M660 347L765.6 376.5C774.1 378.9 779.6 387.9 777.8 396.5L771 430L765.5 450L731.3 441.2C730.3 440.9 729.2 441.6 728.9 442.6L721.8 473.8C721.5 474.8 722.2 475.9 723.2 476.3L780.2 492.7L795.1 496.9C803.3 499.1 807.9 511.6 805.3 524.5L798.3 560.4C795.9 572.3 787.4 581.3 779.3 580.5L764.6 578.9L770.4 557C770.7 556 770 554.9 769 554.6L737.4 545.9C735.8 545.5 734.2 546.4 733.7 548L726 577.3C725.5 578.9 726.5 580.6 728.1 581L764 591.4L771.5 593.2C775.6 594.2 778.2 601.2 777.2 608.9L772.8 643.4L768.4 658.1C767.9 659.7 768.8 661.4 770.4 661.8L823.1 676.9C824.1 677.3 825.2 676.6 825.5 675.6L833.5 641.9C833.8 640.9 834.9 640.2 835.9 640.5L940 668L919 751L926 756L921 780L894 772.5L895 765L883.8 762.5L872.5 805L727.5 835L725 816L702.5 820L695 702.5L660 703L655 515L655 400Z"/></clipPath>
<g clip-path="url(#cL)"><path d="M660 347L765.6 376.5C774.1 378.9 779.6 387.9 777.8 396.5L771 430L765.5 450L731.3 441.2C730.3 440.9 729.2 441.6 728.9 442.6L721.8 473.8C721.5 474.8 722.2 475.9 723.2 476.3L780.2 492.7L795.1 496.9C803.3 499.1 807.9 511.6 805.3 524.5L798.3 560.4C795.9 572.3 787.4 581.3 779.3 580.5L764.6 578.9L770.4 557C770.7 556 770 554.9 769 554.6L737.4 545.9C735.8 545.5 734.2 546.4 733.7 548L726 577.3C725.5 578.9 726.5 580.6 728.1 581L764 591.4L771.5 593.2C775.6 594.2 778.2 601.2 777.2 608.9L772.8 643.4L768.4 658.1C767.9 659.7 768.8 661.4 770.4 661.8L823.1 676.9C824.1 677.3 825.2 676.6 825.5 675.6L833.5 641.9C833.8 640.9 834.9 640.2 835.9 640.5L940 668L919 751L926 756L921 780L894 772.5L895 765L883.8 762.5L872.5 805L727.5 835L725 816L702.5 820L695 702.5L660 703L655 515L655 400Z" fill="#008000"/>
<polygon points="700,350 790,378 786,396 744,386 741,400 752,403 750,410 700,396" fill="#4a7a18"/>
<polygon points="700,374 727,381.2 724.4,391.4 700,388.5" fill="#008000" stroke="#c6c8e0" stroke-width="0.8"/>
<polygon points="744.3,386.3 773.3,393.9 771.2,404.1 765.1,405.1 748.9,401.1 749.9,398.5 742.2,397" fill="#008000" stroke="#c6c8e0" stroke-width="0.8"/>
<polygon points="726,438 702.5,522.4 764.8,540.3 778.1,494" fill="#4a7a18" stroke="#c6c8e0" stroke-width="0.8"/>
<polygon points="781.6,514.8 805,520 800,585 764,580 771,556" fill="#4a7a18" stroke="#c6c8e0" stroke-width="0.8"/>
<polygon points="673,551.7 685.4,551.7 685.4,547.7 727.2,557.8 721,576.2 686,566.5 686,582.8 674,582.8" fill="#4a7a18" stroke="#c6c8e0" stroke-width="0.8"/>
<polygon points="727,578 790,596 778,648 708,629.5" fill="#4a7a18" stroke="#c6c8e0" stroke-width="0.8"/>
<polygon points="765,647.5 825,680 838,640 920,666.2 917.5,680 892.5,673.8 890,687.5 911.2,693.8 906.2,720 822.5,696.2 815,726.2 750,711.2" fill="#4a7a18" stroke="#c6c8e0" stroke-width="0.8"/>
<polyline points="682.4,514 688.5,610 694.5,702" fill="none" stroke="#c6c8e0" stroke-width="1"/>
<path d="M660 347L765.6 376.5C774.1 378.9 779.6 387.9 777.8 396.5L771 430L765.5 450L731.3 441.2C730.3 440.9 729.2 441.6 728.9 442.6L721.8 473.8C721.5 474.8 722.2 475.9 723.2 476.3L780.2 492.7L795.1 496.9C803.3 499.1 807.9 511.6 805.3 524.5L798.3 560.4C795.9 572.3 787.4 581.3 779.3 580.5L764.6 578.9L770.4 557C770.7 556 770 554.9 769 554.6L737.4 545.9C735.8 545.5 734.2 546.4 733.7 548L726 577.3C725.5 578.9 726.5 580.6 728.1 581L764 591.4L771.5 593.2C775.6 594.2 778.2 601.2 777.2 608.9L772.8 643.4L768.4 658.1C767.9 659.7 768.8 661.4 770.4 661.8L823.1 676.9C824.1 677.3 825.2 676.6 825.5 675.6L833.5 641.9C833.8 640.9 834.9 640.2 835.9 640.5L940 668L919 751L926 756L921 780L894 772.5L895 765L883.8 762.5L872.5 805L727.5 835L725 816L702.5 820L695 702.5L660 703L655 515L655 400Z" fill="none" stroke="#c6c8e0" stroke-width="9.8" stroke-opacity=".8"/>
<path d="M660 347L765.6 376.5C774.1 378.9 779.6 387.9 777.8 396.5L771 430L765.5 450L731.3 441.2C730.3 440.9 729.2 441.6 728.9 442.6L721.8 473.8C721.5 474.8 722.2 475.9 723.2 476.3L780.2 492.7L795.1 496.9C803.3 499.1 807.9 511.6 805.3 524.5L798.3 560.4C795.9 572.3 787.4 581.3 779.3 580.5L764.6 578.9L770.4 557C770.7 556 770 554.9 769 554.6L737.4 545.9C735.8 545.5 734.2 546.4 733.7 548L726 577.3C725.5 578.9 726.5 580.6 728.1 581L764 591.4L771.5 593.2C775.6 594.2 778.2 601.2 777.2 608.9L772.8 643.4L768.4 658.1C767.9 659.7 768.8 661.4 770.4 661.8L823.1 676.9C824.1 677.3 825.2 676.6 825.5 675.6L833.5 641.9C833.8 640.9 834.9 640.2 835.9 640.5L940 668L919 751L926 756L921 780L894 772.5L895 765L883.8 762.5L872.5 805L727.5 835L725 816L702.5 820L695 702.5L660 703L655 515L655 400Z" fill="none" stroke="#4a7a18" stroke-width="8"/>
<polygon points="693,700.5 897.5,751 894.5,765 883.8,762.5 872.5,805 727.5,835 725,816 702.5,820 695,702.5" fill="#4a7a18" stroke="#c6c8e0" stroke-width="1"/>
<polygon points="684,703 695,703 702.5,820 720,860 690,890 680,800" fill="#878793" stroke="#c6c8e0" stroke-width="1.4"/>
</g>
<path d="M660 347L765.6 376.5C774.1 378.9 779.6 387.9 777.8 396.5L771 430L765.5 450L731.3 441.2C730.3 440.9 729.2 441.6 728.9 442.6L721.8 473.8C721.5 474.8 722.2 475.9 723.2 476.3L780.2 492.7L795.1 496.9C803.3 499.1 807.9 511.6 805.3 524.5L798.3 560.4C795.9 572.3 787.4 581.3 779.3 580.5L764.6 578.9L770.4 557C770.7 556 770 554.9 769 554.6L737.4 545.9C735.8 545.5 734.2 546.4 733.7 548L726 577.3C725.5 578.9 726.5 580.6 728.1 581L764 591.4L771.5 593.2C775.6 594.2 778.2 601.2 777.2 608.9L772.8 643.4L768.4 658.1C767.9 659.7 768.8 661.4 770.4 661.8L823.1 676.9C824.1 677.3 825.2 676.6 825.5 675.6L833.5 641.9C833.8 640.9 834.9 640.2 835.9 640.5L940 668L919 751L926 756L921 780L894 772.5L895 765L883.8 762.5L872.5 805L727.5 835L725 816L702.5 820L695 702.5L660 703L655 515L655 400Z" fill="none" stroke="#c6c8e0" stroke-width="2"/>
<clipPath id="cE"><path d="M951.6 672L1046.9 695.6C1054.4 697.5 1061.1 705.3 1061.8 712.9L1063.6 731L1062 770.5L968.8 787.5L930 795L934 770L931.5 751.2Z"/></clipPath>
<g clip-path="url(#cE)"><path d="M951.6 672L1046.9 695.6C1054.4 697.5 1061.1 705.3 1061.8 712.9L1063.6 731L1062 770.5L968.8 787.5L930 795L934 770L931.5 751.2Z" fill="#008000"/>
<polygon points="980,678 1050,697 1065,720 1062,745 1052,742 1055,715 1040,705 978,690" fill="#4a7a18"/>
<polygon points="934,749.2 972.7,760.5 1017.5,749.3 1019.6,759.5 1045,753.9 1048,773 960,790 928,796" fill="#4a7a18" stroke="#c6c8e0" stroke-width="0.8"/>
<polygon points="955,695 980,700 975,722 960,718" fill="#4a7a18"/>
<path d="M951.6 672L1046.9 695.6C1054.4 697.5 1061.1 705.3 1061.8 712.9L1063.6 731L1062 770.5L968.8 787.5L930 795L934 770L931.5 751.2Z" fill="none" stroke="#c6c8e0" stroke-width="9.8" stroke-opacity=".8"/>
<path d="M951.6 672L1046.9 695.6C1054.4 697.5 1061.1 705.3 1061.8 712.9L1063.6 731L1062 770.5L968.8 787.5L930 795L934 770L931.5 751.2Z" fill="none" stroke="#4a7a18" stroke-width="8"/>
</g>
<path d="M951.6 672L1046.9 695.6C1054.4 697.5 1061.1 705.3 1061.8 712.9L1063.6 731L1062 770.5L968.8 787.5L930 795L934 770L931.5 751.2Z" fill="none" stroke="#c6c8e0" stroke-width="2"/>
<polyline points="1049,696 1064.3,687" fill="none" stroke="#c6c8e0" stroke-width="1.5"/>
<polyline points="835.2,222.5 835.2,252" fill="none" stroke="#c6c8e0" stroke-width="1.5"/>
<polyline points="745,243 749,257" fill="none" stroke="#c6c8e0" stroke-width="1.5"/>
<polyline points="836.5,372.5 836.5,379.5" fill="none" stroke="#c6c8e0" stroke-width="1.5"/>
<polyline points="836.5,503 836.5,510" fill="none" stroke="#c6c8e0" stroke-width="1.5"/>
<polyline points="836.5,630 836.5,637" fill="none" stroke="#c6c8e0" stroke-width="1.5"/>
<polygon points="790.7,267.9 875.4,291.7 871.1,307.1 786.4,283.3" fill="#c6c8e0" stroke="#c6c8e0" stroke-width="10.6" stroke-linejoin="miter" stroke-opacity=".85"/>
<polygon points="808.8,255.3 866.6,271.6 862,287.9 804.2,271.7" fill="#c6c8e0" stroke="#c6c8e0" stroke-width="10.6" stroke-linejoin="miter" stroke-opacity=".85"/>
<polygon points="790.7,267.9 875.4,291.7 871.1,307.1 786.4,283.3" fill="#4a7a18" stroke="#4a7a18" stroke-width="8.8" stroke-linejoin="miter"/>
<polygon points="808.8,255.3 866.6,271.6 862,287.9 804.2,271.7" fill="#4a7a18" stroke="#4a7a18" stroke-width="8.8" stroke-linejoin="miter"/>
<polygon points="786.4,283.3 871.1,307.1 875.4,291.7 862,287.9 864.4,279.3 848,274.7 846,281.9 821,274.8 823,267.6 806.6,263 804.2,271.7 790.7,267.9" fill="#e8b878"/>
<polygon points="822.2,270.5 845.3,277 844.1,281.3 821,274.8" fill="#4a7a18"/>
<polygon points="823.1,267.1 848.2,274.2 847.2,277.5 822.2,270.5" fill="#fff"/>
<polygon points="792.2,281.3 867.3,302.4 866.3,305.8 791.2,284.7" fill="#fff"/>
<polygon points="809.1,254.4 819.7,257.3 817,267 806.4,264" fill="#8fa0b4"/>
<polygon points="856.2,267.6 866.8,270.6 864.1,280.2 853.5,277.2" fill="#8fa0b4"/>
<polygon points="924.2,257.9 1009.1,280.9 1004.9,296.4 920,273.3" fill="#c6c8e0" stroke="#c6c8e0" stroke-width="10.6" stroke-linejoin="miter" stroke-opacity=".85"/>
<polygon points="942.2,245.1 1000.1,260.9 995.6,277.3 937.7,261.5" fill="#c6c8e0" stroke="#c6c8e0" stroke-width="10.6" stroke-linejoin="miter" stroke-opacity=".85"/>
<polygon points="924.2,257.9 1009.1,280.9 1004.9,296.4 920,273.3" fill="#4a7a18" stroke="#4a7a18" stroke-width="8.8" stroke-linejoin="miter"/>
<polygon points="942.2,245.1 1000.1,260.9 995.6,277.3 937.7,261.5" fill="#4a7a18" stroke="#4a7a18" stroke-width="8.8" stroke-linejoin="miter"/>
<polygon points="920,273.3 1004.9,296.4 1009.1,280.9 995.6,277.3 998,268.6 981.6,264.1 979.6,271.4 954.5,264.5 956.5,257.3 940.1,252.8 937.7,261.5 924.2,257.9" fill="#e8b878"/>
<polygon points="955.7,260.2 978.8,266.5 977.7,270.8 954.5,264.5" fill="#4a7a18"/>
<polygon points="956.6,256.8 981.7,263.6 980.8,267 955.7,260.2" fill="#fff"/>
<polygon points="925.7,271.2 1001,291.7 1000.1,295.1 924.8,274.6" fill="#fff"/>
<polygon points="942.4,244.2 953,247 950.4,256.7 939.8,253.8" fill="#8fa0b4"/>
<polygon points="989.7,257 1000.3,259.9 997.7,269.5 987.1,266.7" fill="#8fa0b4"/>
<polygon points="929.3,438.3 1014.1,462 1009.8,477.4 925,453.8" fill="#c6c8e0" stroke="#c6c8e0" stroke-width="10.6" stroke-linejoin="miter" stroke-opacity=".85"/>
<polygon points="947.4,425.7 1005.1,441.9 1000.6,458.2 942.8,442.1" fill="#c6c8e0" stroke="#c6c8e0" stroke-width="10.6" stroke-linejoin="miter" stroke-opacity=".85"/>
<polygon points="929.3,438.3 1014.1,462 1009.8,477.4 925,453.8" fill="#4a7a18" stroke="#4a7a18" stroke-width="8.8" stroke-linejoin="miter"/>
<polygon points="947.4,425.7 1005.1,441.9 1000.6,458.2 942.8,442.1" fill="#4a7a18" stroke="#4a7a18" stroke-width="8.8" stroke-linejoin="miter"/>
<polygon points="925,453.8 1009.8,477.4 1014.1,462 1000.6,458.2 1003,449.6 986.6,445 984.6,452.2 959.6,445.2 961.6,438 945.2,433.4 942.8,442.1 929.3,438.3" fill="#e8b878"/>
<polygon points="960.8,440.9 983.9,447.4 982.7,451.7 959.6,445.2" fill="#4a7a18"/>
<polygon points="961.7,437.5 986.8,444.5 985.8,447.9 960.8,440.9" fill="#fff"/>
<polygon points="930.8,451.7 1005.9,472.7 1004.9,476.1 929.8,455.1" fill="#fff"/>
<polygon points="947.6,424.8 958.2,427.7 955.5,437.4 944.9,434.4" fill="#8fa0b4"/>
<polygon points="994.8,437.9 1005.4,440.9 1002.7,450.5 992.1,447.6" fill="#8fa0b4"/>
<polygon points="964.2,702.1 1049.1,725.4 1044.8,740.9 960,717.5" fill="#c6c8e0" stroke="#c6c8e0" stroke-width="10.6" stroke-linejoin="miter" stroke-opacity=".85"/>
<polygon points="982.3,689.4 1040.1,705.3 1035.6,721.7 977.7,705.8" fill="#c6c8e0" stroke="#c6c8e0" stroke-width="10.6" stroke-linejoin="miter" stroke-opacity=".85"/>
<polygon points="964.2,702.1 1049.1,725.4 1044.8,740.9 960,717.5" fill="#4a7a18" stroke="#4a7a18" stroke-width="8.8" stroke-linejoin="miter"/>
<polygon points="982.3,689.4 1040.1,705.3 1035.6,721.7 977.7,705.8" fill="#4a7a18" stroke="#4a7a18" stroke-width="8.8" stroke-linejoin="miter"/>
<polygon points="960,717.5 1044.8,740.9 1049.1,725.4 1035.6,721.7 1038,713 1021.6,708.5 1019.6,715.8 994.5,708.9 996.5,701.6 980.1,697.1 977.7,705.8 964.2,702.1" fill="#e8b878"/>
<polygon points="995.7,704.5 1018.9,710.9 1017.7,715.2 994.5,708.9" fill="#4a7a18"/>
<polygon points="996.7,701.1 1021.7,708.1 1020.8,711.4 995.7,704.5" fill="#fff"/>
<polygon points="965.7,715.5 1040.9,736.2 1040,739.5 964.8,718.8" fill="#fff"/>
<polygon points="982.5,688.4 993.1,691.4 990.5,701 979.9,698.1" fill="#8fa0b4"/>
<polygon points="1029.8,701.5 1040.4,704.4 1037.7,714 1027.1,711.1" fill="#8fa0b4"/>
<polygon points="820,403.3 877.6,420.2 872.8,436.5 815.2,419.6" fill="#c6c8e0" stroke="#c6c8e0" stroke-width="10.6" stroke-linejoin="miter" stroke-opacity=".85"/>
<polygon points="841,399 861.2,405 858.4,414.5 838.2,408.6" fill="#c6c8e0" stroke="#c6c8e0" stroke-width="10.6" stroke-linejoin="miter" stroke-opacity=".85"/>
<polygon points="820,403.3 877.6,420.2 872.8,436.5 815.2,419.6" fill="#4a7a18" stroke="#4a7a18" stroke-width="8.8" stroke-linejoin="miter"/>
<polygon points="841,399 861.2,405 858.4,414.5 838.2,408.6" fill="#4a7a18" stroke="#4a7a18" stroke-width="8.8" stroke-linejoin="miter"/>
<polygon points="820,403.3 877.6,420.2 872.8,436.5 815.2,419.6" fill="#e8b878"/>
<polygon points="837.3,404.7 842.1,406.1 840.8,410.4 836,409" fill="#fff"/>
<polygon points="855.2,411 861,412.7 859.7,417 854,415.3" fill="#fff"/>
<polygon points="841.5,404.4 856.9,408.9 855.3,414.2 840,409.7" fill="#8fa0b4"/>
<polygon points="848.6,398.1 854.4,399.8 851.8,408.5 846.1,406.8" fill="#8fa0b4"/>
<polygon points="829.5,420.7 860.2,429.7 859.3,432.5 828.6,423.5" fill="#fff"/>
<polygon points="827.1,532.4 884.9,548.7 880.2,565.1 822.5,548.8" fill="#c6c8e0" stroke="#c6c8e0" stroke-width="10.6" stroke-linejoin="miter" stroke-opacity=".85"/>
<polygon points="848.1,527.9 868.3,533.7 865.6,543.3 845.4,537.6" fill="#c6c8e0" stroke="#c6c8e0" stroke-width="10.6" stroke-linejoin="miter" stroke-opacity=".85"/>
<polygon points="827.1,532.4 884.9,548.7 880.2,565.1 822.5,548.8" fill="#4a7a18" stroke="#4a7a18" stroke-width="8.8" stroke-linejoin="miter"/>
<polygon points="848.1,527.9 868.3,533.7 865.6,543.3 845.4,537.6" fill="#4a7a18" stroke="#4a7a18" stroke-width="8.8" stroke-linejoin="miter"/>
<polygon points="827.1,532.4 884.9,548.7 880.2,565.1 822.5,548.8" fill="#e8b878"/>
<polygon points="844.4,533.7 849.3,535 848,539.3 843.2,538" fill="#fff"/>
<polygon points="862.4,539.8 868.2,541.4 867,545.8 861.2,544.1" fill="#fff"/>
<polygon points="848.7,533.3 864.1,537.7 862.6,542.9 847.2,538.6" fill="#8fa0b4"/>
<polygon points="855.7,527 861.5,528.6 859,537.3 853.2,535.6" fill="#8fa0b4"/>
<polygon points="836.8,549.7 867.6,558.4 866.8,561.3 836,552.6" fill="#fff"/>
<polygon points="850.9,682.4 908.6,698.7 904,715.1 846.2,698.8" fill="#c6c8e0" stroke="#c6c8e0" stroke-width="10.6" stroke-linejoin="miter" stroke-opacity=".85"/>
<polygon points="871.9,677.9 892.1,683.7 889.4,693.3 869.2,687.6" fill="#c6c8e0" stroke="#c6c8e0" stroke-width="10.6" stroke-linejoin="miter" stroke-opacity=".85"/>
<polygon points="850.9,682.4 908.6,698.7 904,715.1 846.2,698.8" fill="#4a7a18" stroke="#4a7a18" stroke-width="8.8" stroke-linejoin="miter"/>
<polygon points="871.9,677.9 892.1,683.7 889.4,693.3 869.2,687.6" fill="#4a7a18" stroke="#4a7a18" stroke-width="8.8" stroke-linejoin="miter"/>
<polygon points="850.9,682.4 908.6,698.7 904,715.1 846.2,698.8" fill="#e8b878"/>
<polygon points="868.2,683.7 873,685 871.8,689.3 867,688" fill="#fff"/>
<polygon points="886.2,689.8 892,691.4 890.7,695.8 885,694.1" fill="#fff"/>
<polygon points="872.4,683.3 887.8,687.7 886.3,692.9 870.9,688.6" fill="#8fa0b4"/>
<polygon points="879.4,677 885.2,678.6 882.8,687.3 877,685.6" fill="#8fa0b4"/>
<polygon points="860.5,699.7 891.3,708.4 890.5,711.3 859.7,702.6" fill="#fff"/>
<polygon points="701.9,396.4 759.8,412.5 755.2,428.8 697.4,412.8" fill="#c6c8e0" stroke="#c6c8e0" stroke-width="10.6" stroke-linejoin="miter" stroke-opacity=".85"/>
<polygon points="722.9,391.9 743.2,397.5 740.5,407.1 720.3,401.5" fill="#c6c8e0" stroke="#c6c8e0" stroke-width="10.6" stroke-linejoin="miter" stroke-opacity=".85"/>
<polygon points="701.9,396.4 759.8,412.5 755.2,428.8 697.4,412.8" fill="#4a7a18" stroke="#4a7a18" stroke-width="8.8" stroke-linejoin="miter"/>
<polygon points="722.9,391.9 743.2,397.5 740.5,407.1 720.3,401.5" fill="#4a7a18" stroke="#4a7a18" stroke-width="8.8" stroke-linejoin="miter"/>
<polygon points="701.9,396.4 759.8,412.5 755.2,428.8 697.4,412.8" fill="#e8b878"/>
<polygon points="719.3,397.6 724.1,398.9 722.9,403.3 718.1,401.9" fill="#fff"/>
<polygon points="737.3,403.6 743.1,405.2 741.9,409.6 736.1,408" fill="#fff"/>
<polygon points="723.5,397.2 738.9,401.5 737.5,406.8 722,402.5" fill="#8fa0b4"/>
<polygon points="730.5,390.8 736.3,392.4 733.8,401.1 728.1,399.5" fill="#8fa0b4"/>
<polygon points="711.7,413.7 742.5,422.2 741.7,425.1 710.9,416.5" fill="#fff"/>
<polygon points="712.3,504.8 767.8,519.7 763.6,535.2 708.1,520.2" fill="#4a7a18" stroke="#4a7a18" stroke-width="8.8" stroke-linejoin="miter"/>
<polygon points="716,487.1 729.5,490.8 724.8,508.1 711.3,504.5" fill="#4a7a18" stroke="#4a7a18" stroke-width="8.8" stroke-linejoin="miter"/>
<polygon points="727.4,498.5 746.7,503.7 744.1,513.3 724.8,508.1" fill="#4a7a18" stroke="#4a7a18" stroke-width="8.8" stroke-linejoin="miter"/>
<polygon points="712.3,504.8 767.8,519.7 763.6,535.2 708.1,520.2" fill="#e8b878"/>
<polygon points="719.9,488.2 729.5,490.8 724.6,509.1 714.9,506.5" fill="#e8b878"/>
<polygon points="714.4,492.9 718.3,493.9 713.1,513.3 709.2,512.2" fill="#fff"/>
<polygon points="727.4,498.5 734.2,500.3 732.6,506.1 725.9,504.3" fill="#fff"/>
<polygon points="743.2,509 753.9,511.8 752.7,516.2 742.1,513.3" fill="#fff"/>
<polygon points="731.2,503.6 745.7,507.6 744.3,512.9 729.8,509" fill="#8fa0b4"/>
<polygon points="738.1,497.2 743.9,498.8 741.6,507.5 735.8,505.9" fill="#8fa0b4"/>
<polygon points="727.2,522.3 760.1,531.1 759.3,534 726.4,525.1" fill="#fff"/>
<polygon points="718.3,608.6 773.6,624.4 769.2,639.8 713.9,624" fill="#4a7a18" stroke="#4a7a18" stroke-width="8.8" stroke-linejoin="miter"/>
<polygon points="722.3,591 735.7,594.9 730.8,612.2 717.3,608.3" fill="#4a7a18" stroke="#4a7a18" stroke-width="8.8" stroke-linejoin="miter"/>
<polygon points="733.5,602.6 752.8,608 750,617.7 730.8,612.2" fill="#4a7a18" stroke="#4a7a18" stroke-width="8.8" stroke-linejoin="miter"/>
<polygon points="718.3,608.6 773.6,624.4 769.2,639.8 713.9,624" fill="#e8b878"/>
<polygon points="726.1,592.1 735.7,594.9 730.5,613.1 720.9,610.4" fill="#e8b878"/>
<polygon points="720.6,596.8 724.5,597.9 719,617.1 715.1,616" fill="#fff"/>
<polygon points="733.5,602.6 740.3,604.5 738.6,610.2 731.9,608.3" fill="#fff"/>
<polygon points="749.2,613.3 759.8,616.3 758.5,620.6 748,617.6" fill="#fff"/>
<polygon points="737.2,607.8 751.7,611.9 750.2,617.2 735.7,613.1" fill="#8fa0b4"/>
<polygon points="744.2,601.4 750,603.1 747.5,611.7 741.8,610.1" fill="#8fa0b4"/>
<polygon points="733,626.3 765.7,635.6 764.9,638.5 732.2,629.2" fill="#fff"/>
<polygon points="760.4,692 815.9,706.8 811.8,722.3 756.2,707.5" fill="#4a7a18" stroke="#4a7a18" stroke-width="8.8" stroke-linejoin="miter"/>
<polygon points="764,674.4 777.6,678 772.9,695.4 759.4,691.8" fill="#4a7a18" stroke="#4a7a18" stroke-width="8.8" stroke-linejoin="miter"/>
<polygon points="775.5,685.7 794.8,690.9 792.3,700.5 772.9,695.4" fill="#4a7a18" stroke="#4a7a18" stroke-width="8.8" stroke-linejoin="miter"/>
<polygon points="760.4,692 815.9,706.8 811.8,722.3 756.2,707.5" fill="#e8b878"/>
<polygon points="767.9,675.4 777.6,678 772.7,696.3 763,693.8" fill="#e8b878"/>
<polygon points="762.5,680.2 766.3,681.2 761.2,700.5 757.3,699.5" fill="#fff"/>
<polygon points="775.5,685.7 782.3,687.5 780.7,693.3 774,691.5" fill="#fff"/>
<polygon points="791.4,696.1 802,699 800.8,703.3 790.2,700.5" fill="#fff"/>
<polygon points="779.3,690.9 793.8,694.7 792.4,700 777.9,696.2" fill="#8fa0b4"/>
<polygon points="786.2,684.4 792,686 789.7,694.7 783.9,693.1" fill="#8fa0b4"/>
<polygon points="775.4,709.5 808.2,718.2 807.5,721.1 774.6,712.4" fill="#fff"/>
<polygon points="682.6,294.2 738,309.5 733.7,325 678.3,309.6" fill="#4a7a18" stroke="#4a7a18" stroke-width="8.8" stroke-linejoin="miter"/>
<polygon points="686.4,276.6 699.9,280.3 695.1,297.7 681.6,293.9" fill="#4a7a18" stroke="#4a7a18" stroke-width="8.8" stroke-linejoin="miter"/>
<polygon points="697.8,288 717,293.4 714.4,303 695.1,297.7" fill="#4a7a18" stroke="#4a7a18" stroke-width="8.8" stroke-linejoin="miter"/>
<polygon points="682.6,294.2 738,309.5 733.7,325 678.3,309.6" fill="#e8b878"/>
<polygon points="690.3,277.6 699.9,280.3 694.8,298.6 685.2,295.9" fill="#e8b878"/>
<polygon points="684.8,282.4 688.7,283.4 683.3,302.7 679.5,301.6" fill="#fff"/>
<polygon points="697.8,288 704.5,289.9 702.9,295.7 696.2,293.8" fill="#fff"/>
<polygon points="713.5,298.6 724.1,301.6 722.9,305.9 712.3,302.9" fill="#fff"/>
<polygon points="701.5,293.2 716,297.2 714.5,302.5 700.1,298.5" fill="#8fa0b4"/>
<polygon points="708.5,286.8 714.3,288.4 711.9,297.1 706.1,295.5" fill="#8fa0b4"/>
<polygon points="697.4,311.8 730.2,320.9 729.4,323.8 696.6,314.7" fill="#fff"/>
<polygon points="996.2,343.8 1022.5,351.2 1011.2,397.5 983.8,390" fill="#c6c8e0" stroke="#c6c8e0" stroke-width="9.4" stroke-linejoin="miter" stroke-opacity=".85"/>
<polygon points="996.2,343.8 1022.5,351.2 1011.2,397.5 983.8,390" fill="#4a7a18" stroke="#4a7a18" stroke-width="7.6" stroke-linejoin="miter"/>
<polygon points="996.2,343.8 1022.5,351.2 1011.2,397.5 983.8,390" fill="#e8b878"/>
<polygon points="778.3,440 806.5,446.3 800.3,473.2 772.7,465.7" fill="#c6c8e0" stroke="#c6c8e0" stroke-width="9.4" stroke-linejoin="miter" stroke-opacity=".85"/>
<polygon points="778.3,440 806.5,446.3 800.3,473.2 772.7,465.7" fill="#4a7a18" stroke="#4a7a18" stroke-width="7.6" stroke-linejoin="miter"/>
<polygon points="778.3,440 806.5,446.3 800.3,473.2 772.7,465.7" fill="#e8b878"/>
<polygon points="1006,634 1047.5,644 1039,670 997.5,659" fill="#e8b878"/>
<polygon points="898.8,750 926.2,756.2 921.2,780 893.8,772.5" fill="#e8b878"/>
<polygon points="936.1,770.7 957.5,776.8 960.5,788.5 930,795.1" fill="#e8b878" stroke="#fff" stroke-width="0.8"/>
<polygon points="958.5,776.3 974.8,771.7 1015.5,764.6 1018.5,775.8 968.7,787" fill="#e8b878"/>
<polygon points="974.8,771.7 1014.5,756.5 1015.5,764.6" fill="#ffffc8"/>
<polyline points="960.5,775.2 1014.3,755.3" fill="none" stroke="#878793" stroke-width="1.6"/>
<polygon points="959,778 966,786.5 961,788" fill="#008000"/>
<polygon points="725,750 761.2,760 765,780 805,771.2 845,746.2 858.8,750 845,806.2 730,830" fill="#e8b878" stroke="#fff" stroke-width="0.9"/>
<polygon points="930.3,564.3 1015.5,586.5 1011.5,602 926.3,579.8" fill="#c6c8e0" stroke="#c6c8e0" stroke-width="10.6" stroke-linejoin="miter" stroke-opacity=".85"/>
<polygon points="948.2,551.4 1006.2,566.5 1001.9,583 943.9,567.8" fill="#c6c8e0" stroke="#c6c8e0" stroke-width="10.6" stroke-linejoin="miter" stroke-opacity=".85"/>
<polygon points="930.3,564.3 1015.5,586.5 1011.5,602 926.3,579.8" fill="#4a7a18" stroke="#4a7a18" stroke-width="8.8" stroke-linejoin="miter"/>
<polygon points="948.2,551.4 1006.2,566.5 1001.9,583 943.9,567.8" fill="#4a7a18" stroke="#4a7a18" stroke-width="8.8" stroke-linejoin="miter"/>
<polygon points="929.3,562.5 942.6,567.5 947.7,553.3 958.3,554.3 959.2,560.5 961.9,562.2 962.8,569.7 975,575.1 983.2,575.7 985.3,570 989,569.3 991.9,565.9 995.4,564.5 1005.7,566.6 1003.1,581.2 1016.4,585.9 1011.8,603.1 926.3,579.8" fill="url(#hatch)"/>
<polygon points="949.1,553.7 956.9,555.7 954.8,563.5 947.1,561.4" fill="#8fa0b4"/>
<polygon points="996.7,565.6 1003.9,567.5 1001.5,576.7 994.3,574.8" fill="#8fa0b4"/>
<polygon points="964.9,562.5 987.2,568.3 986.5,570.7 964.3,564.9" fill="#fff"/>
<polygon points="933.7,583.3 1005.3,601.9 1004.6,604.3 933,585.7" fill="#fff"/>
<polygon points="929.3,562.5 942.6,567.5 947.7,553.3 958.3,554.3 959.2,560.5 961.9,562.2 962.8,569.7 975,575.1 983.2,575.7 985.3,570 989,569.3 991.9,565.9 995.4,564.5 1005.7,566.6 1003.1,581.2 1016.4,585.9 1011.8,603.1 926.3,579.8" fill="none" stroke="#f00000" stroke-width="3" stroke-linejoin="round"/>
<path d="M827.9 254.5C828 253.7 828.7 253.2 829.5 253.4L848 258.1C848.8 258.3 849.3 259.1 849.1 259.9L847.7 264.6C847.5 265.4 846.7 265.8 845.9 265.6L829.1 260.9C828.3 260.7 827.7 259.8 827.8 259Z" fill="#878793" stroke="#c6c8e0" stroke-width="1.5"/>
<path d="M961.9 242.4C962.3 240.8 964 239.8 965.6 240.2L982.3 244.4C983.9 244.8 984.8 246.4 984.4 248L982.8 253.1C982.4 254.7 980.7 255.7 979.1 255.3L962.4 251.2C960.8 250.8 959.9 249.2 960.3 247.6Z" fill="#878793" stroke="#c6c8e0" stroke-width="1.5"/>
<path d="M967.1 423.9C967.6 422.3 969.3 421.4 970.9 421.8L986.1 426.2C987.7 426.6 988.6 428.3 988.1 429.9L986.9 434.1C986.4 435.7 984.7 436.6 983.1 436.2L967.9 431.8C966.3 431.4 965.4 429.7 965.9 428.1Z" fill="#878793" stroke="#c6c8e0" stroke-width="1.5"/>
<path d="M966.8 549.5C966.9 548.7 967.7 548.1 968.5 548.3L987.5 552.7C988.3 552.9 988.9 553.7 988.7 554.5L987.3 560.5C987.1 561.3 986.3 561.8 985.5 561.7L967.5 557.3C966.7 557.2 966.1 556.3 966.2 555.5Z" fill="#878793" stroke="#c6c8e0" stroke-width="1.5"/>
<path d="M1002.8 687.5C1002.9 686.7 1003.7 686.2 1004.5 686.3L1022.5 690.7C1023.3 690.8 1023.9 691.7 1023.7 692.5L1022.3 698.5C1022.1 699.3 1021.3 699.8 1020.5 699.6L1003.5 695.4C1002.7 695.2 1002.1 694.3 1002.2 693.5Z" fill="#878793" stroke="#c6c8e0" stroke-width="1.5"/>
<path d="M739.6 483.5C739.8 482.4 740.9 481.7 741.9 482L750.6 484.5C751.6 484.8 752.3 485.9 752.1 487L751.9 487.5C751.7 488.6 750.6 489.3 749.6 489L740.9 486.5C739.9 486.2 739.2 485.1 739.4 484Z" fill="#878793" stroke="#c6c8e0" stroke-width="1.5"/>
<path d="M743.1 588C743.3 586.9 744.4 586.2 745.4 586.5L752.9 588.5C753.9 588.8 754.6 589.9 754.4 591L754.2 591.5C754 592.6 752.9 593.3 751.9 593L744.4 591C743.4 590.7 742.7 589.6 742.9 588.5Z" fill="#878793" stroke="#c6c8e0" stroke-width="1.5"/>
<path d="M786.1 669C786.3 667.9 787.4 667.2 788.4 667.5L795.9 669.5C796.9 669.8 797.6 670.9 797.4 672L797.2 672.5C797 673.6 795.9 674.3 794.9 674L787.4 672C786.4 671.7 785.7 670.6 785.9 669.5Z" fill="#878793" stroke="#c6c8e0" stroke-width="1.5"/>
<polyline points="750,253.5 790,244 835,234.5 865,227.5 900,223.2 950,218.2 975,217 1025,213.2 1050,212.6 1052.3,217 1045,270 1036,350 1030,400 1026.2,450 1025,482.5 1026.2,530 1030,555 1036,575 1046,615 1054,660 1058.7,690 1057,700.7 1052.6,718 1043.5,744.5 1040.5,760 1042,768 1039,772.7 1023.6,774.8" fill="none" stroke="#fff" stroke-width="0.9" stroke-dasharray="5 3"/>
<polyline points="668,260.3 708,252.3 745,245.3 835,224.8 925,207.8 930,207.5" fill="none" stroke="#c6c8e0" stroke-width="2"/>
</g>
<polyline points="668,258 708,250 745,243 835,222.5 925,205.5 948,202" fill="none" stroke="#ff00ff" stroke-width="1.3"/>
<polyline points="948,202 960,200.5 990,199 1066,199" fill="none" stroke="#c6c8e0" stroke-width="1.2"/>
<polyline points="1066,199 1055.6,278" fill="none" stroke="#c6c8e0" stroke-width="1.2"/>
<polyline points="1055.6,278 1055,282.5 1046,350 1042,380.5 1036.6,421 1035,436 1032,487 1034,512 1036.7,535 1041.3,565.5 1047.9,596 1056.6,626.6 1062.6,646 1066.4,660 1070.5,690.5 1073.5,725 1075.5,759.5 1074.2,760 1074,800" fill="none" stroke="#ff00ff" stroke-width="1.3"/>
<polyline points="1074,800 1033,810 840,849.7 694.5,879.5" fill="none" stroke="#c6c8e0" stroke-width="1.2"/>
<polyline points="694.5,879.5 683.8,702.5 679,610 671,515" fill="none" stroke="#c6c8e0" stroke-width="1.4"/>
<polyline points="694.5,879.5 690,800" fill="none" stroke="#ff00ff" stroke-width="0.8"/>
<polyline points="677.5,592 674,550" fill="none" stroke="#ff00ff" stroke-width="1.2"/>
</svg>
<svg class="abs" style="left:40px;top:790px" width="80" height="70" viewBox="40 790 80 70" shape-rendering="crispEdges"><path d="M54.5 808 V847" stroke="#00e000" stroke-width="1"/><path d="M62 847.5 H95" stroke="#f00000" stroke-width="1"/><path d="M54.5 838 V847.5 H62" fill="none" stroke="#0000ff" stroke-width="1"/><path d="M55 797 L58 802 L61 797 M58 802 V807" fill="none" stroke="#00e000" stroke-width="1"/><path d="M56 838 H61 L56 847 H61" fill="none" stroke="#0000ff" stroke-width="1"/><path d="M95 838 L101 848 M101 838 L95 848" fill="none" stroke="#f00000" stroke-width="1"/></svg>
<div id="docstrip" class="abs"></div>
<div id="docstrip2" class="abs"></div>
<div id="gap" class="abs"></div>
<div id="cmdbg" class="abs"></div>
<div id="cmd" class="abs">
<div style="top:2px">建筑构件<span class="a">_</span>雨篷<span class="a">_1_</span>无<span class="a">_0.0_19#4_V2.2</span></div>
<div style="top:14px">项目<span class="a">(</span>文件<span class="a">)</span>导入完成。</div>
<div style="top:26px">命令<span class="a">: ERASE</span></div>
<div style="top:38px">命令<span class="a">: CEE</span></div>
</div>
<svg class="abs" style="left:0;top:900px" width="230" height="22" viewBox="0 0 230 22"><path d="M16 1.5 L34 18.5 H211 Q212.5 18.5 212.5 17 V1.5 Z" fill="#fff" stroke="#9a9eb8" stroke-width="1"/><path d="M10.5 7 V15 L6 11.5 Z" fill="none" stroke="#2a3a9a" stroke-width="1"/></svg><div class="abs" style="left:50px;top:902px;font-family:'Liberation Mono',monospace;font-weight:bold;font-size:12px;line-height:16px;letter-spacing:0px;white-space:pre">20190403-1#<span style="font-size:13px">地块总图规整</span></div>
<div id="dlg" class="abs">
<div id="dlg-title" class="abs">失误检测</div>
<div id="dlg-x" class="abs">x</div>
<div class="tb" style="left:8px"><svg width="14" height="14" viewBox="0 0 15 15"><path d="M3.5 6.5 A4 3.6 0 0 1 11 5.4 M11.5 8.5 A4 3.6 0 0 1 4 9.6" fill="none" stroke="#2a5ac8" stroke-width="1.6"/><path d="M9.4 3 L12.6 5.8 L8.6 6.8Z M5.6 12 L2.4 9.2 L6.4 8.2Z" fill="#2a5ac8"/></svg></div>
<div class="tb" style="left:31px"><svg width="14" height="14" viewBox="0 0 15 15"><path d="M2 3.5 H6 L6.5 9 L8.5 3.5 H10.5 L10.8 9 L13 3.5 H14 L11 12 H9 L8.7 6.6 L6.6 12 H4.6 L3.6 4.6 H2Z" fill="#2a4fc0"/></svg></div>
<div class="tb" style="left:54px"><svg width="14" height="14" viewBox="0 0 15 15"><rect x="1.5" y="2" width="12" height="11.5" fill="#fff" stroke="#2a66d8" stroke-width="1"/><rect x="1.5" y="2" width="12" height="2.6" fill="#2a66d8"/><path d="M5.5 4 V13.5 M9.5 4 V13.5 M1.5 7.5 H13.5 M1.5 10.5 H13.5" stroke="#2a66d8" stroke-width="1"/></svg></div>
<div class="tb" style="left:77px"><svg width="14" height="14" viewBox="0 0 15 15"><path d="M3 2.5 H8 V12 H3Z" fill="#2a66d8" stroke="#163a90" stroke-width="1"/><path d="M7 2.5 H11.5 V11.5 H8 L6 13.5 V4Z" fill="#f4f8ff" stroke="#163a90" stroke-width="1.1"/></svg></div>
<div class="abs" style="left:517px;top:38px;width:13px;height:13px;border:1px solid #333;background:#fff"><svg class="abs" style="left:0;top:0" width="11" height="11" viewBox="0 0 11 11"><path d="M1.5 5.5 L4 8.5 L9.5 2" fill="none" stroke="#3c3c3c" stroke-width="1.2"/></svg></div>
<div class="abs" style="left:533px;top:37px;font-size:12px;line-height:16px">视图定位</div>
<div class="abs" style="left:10px;top:64px;width:62px;height:21px;background:#f0f0f0;border-left:1px solid #fff;border-top:1px solid #fff;border-right:2px solid #6d6d6d;color:#e00000;font-size:12px;line-height:20px;padding-left:5px">失误检测</div>
<div id="list" class="abs">
<div class="abs" style="left:0;top:0;width:558px;height:25px;background:#fff">
<div class="abs" style="left:0px;top:0;width:62px;height:25px;line-height:24px;text-align:center;font-size:12px;border-right:1px solid #e5e5e5;padding-right:3px">序号</div>
<div class="abs" style="left:62px;top:0;width:126px;height:25px;line-height:24px;text-align:center;font-size:12px;border-right:1px solid #e5e5e5;padding-right:0px">类型</div>
<div class="abs" style="left:188px;top:0;width:126px;height:25px;line-height:24px;text-align:center;font-size:12px;border-right:1px solid #e5e5e5;padding-right:0px">类型</div>
<div class="abs" style="left:314px;top:0;width:126px;height:25px;line-height:24px;text-align:center;font-size:12px;border-right:1px solid #e5e5e5;padding-right:0px">失误描述</div>
<div class="abs" style="left:440px;top:0;width:126px;height:25px;line-height:24px;text-align:center;font-size:12px;border-right:1px solid #e5e5e5;padding-right:0px">处理</div>
</div>
<div class="row" style="top:23px"><i style="left:3px;width:59px">1</i><i style="left:62px;width:126px;border-left:1px solid #f0f0f0">建筑</i><i style="left:188px;width:126px;border-left:1px solid #f0f0f0">建筑基底</i><i style="left:314px;width:126px;border-left:1px solid #f0f0f0">重叠面积:294.61</i><i style="left:440px;width:124px;border-left:1px solid #f0f0f0">请手动处理</i></div>
<div class="row" style="top:40px"><i style="left:3px;width:59px">2</i><i style="left:62px;width:126px;border-left:1px solid #f0f0f0">建筑</i><i style="left:188px;width:126px;border-left:1px solid #f0f0f0">建筑基底</i><i style="left:314px;width:126px;border-left:1px solid #f0f0f0">重叠面积:30.07</i><i style="left:440px;width:124px;border-left:1px solid #f0f0f0">请手动处理</i></div>
<div class="row sel" style="top:57px"><i style="left:-2px;width:59px">3</i><i style="left:57px;width:126px;border-left:1px solid #f0f0f0">建筑</i><i style="left:183px;width:126px;border-left:1px solid #f0f0f0">建筑基底</i><i style="left:309px;width:126px;border-left:1px solid #f0f0f0">重叠面积:445.23</i><i style="left:435px;width:124px;border-left:1px solid #f0f0f0">请手动处理</i></div>
<div class="row" style="top:74px"><i style="left:3px;width:59px">4</i><i style="left:62px;width:126px;border-left:1px solid #f0f0f0">建筑</i><i style="left:188px;width:126px;border-left:1px solid #f0f0f0">建筑基底</i><i style="left:314px;width:126px;border-left:1px solid #f0f0f0">重叠面积:314.56</i><i style="left:440px;width:124px;border-left:1px solid #f0f0f0">请手动处理</i></div>
<div class="row" style="top:91px"><i style="left:3px;width:59px">5</i><i style="left:62px;width:126px;border-left:1px solid #f0f0f0">建筑</i><i style="left:188px;width:126px;border-left:1px solid #f0f0f0">建筑基底</i><i style="left:314px;width:126px;border-left:1px solid #f0f0f0">重叠面积:314.56</i><i style="left:440px;width:124px;border-left:1px solid #f0f0f0">请手动处理</i></div>
<div class="row" style="top:108px"><i style="left:3px;width:59px">6</i><i style="left:62px;width:126px;border-left:1px solid #f0f0f0">建筑</i><i style="left:188px;width:126px;border-left:1px solid #f0f0f0">建筑基底</i><i style="left:314px;width:126px;border-left:1px solid #f0f0f0">重叠面积:260.07</i><i style="left:440px;width:124px;border-left:1px solid #f0f0f0">请手动处理</i></div>
<div class="row" style="top:125px"><i style="left:3px;width:59px">7</i><i style="left:62px;width:126px;border-left:1px solid #f0f0f0">建筑</i><i style="left:188px;width:126px;border-left:1px solid #f0f0f0">建筑基底</i><i style="left:314px;width:126px;border-left:1px solid #f0f0f0">重叠面积:443.83</i><i style="left:440px;width:124px;border-left:1px solid #f0f0f0">请手动处理</i></div>
<div class="row" style="top:142px"><i style="left:3px;width:59px">8</i><i style="left:62px;width:126px;border-left:1px solid #f0f0f0">建筑</i><i style="left:188px;width:126px;border-left:1px solid #f0f0f0">建筑基底</i><i style="left:314px;width:126px;border-left:1px solid #f0f0f0">重叠面积:158.97</i><i style="left:440px;width:124px;border-left:1px solid #f0f0f0">请手动处理</i></div>
<div class="row" style="top:159px"><i style="left:3px;width:59px">9</i><i style="left:62px;width:126px;border-left:1px solid #f0f0f0">建筑</i><i style="left:188px;width:126px;border-left:1px solid #f0f0f0">建筑基底</i><i style="left:314px;width:126px;border-left:1px solid #f0f0f0">重叠面积:156.12</i><i style="left:440px;width:124px;border-left:1px solid #f0f0f0">请手动处理</i></div>
<div class="row" style="top:176px"><i style="left:3px;width:59px">10</i><i style="left:62px;width:126px;border-left:1px solid #f0f0f0">建筑</i><i style="left:188px;width:126px;border-left:1px solid #f0f0f0">建筑基底</i><i style="left:314px;width:126px;border-left:1px solid #f0f0f0">重叠面积:87.09</i><i style="left:440px;width:124px;border-left:1px solid #f0f0f0">请手动处理</i></div>
<div class="row" style="top:193px"><i style="left:3px;width:59px">11</i><i style="left:62px;width:126px;border-left:1px solid #f0f0f0">建筑</i><i style="left:188px;width:126px;border-left:1px solid #f0f0f0">建筑基底</i><i style="left:314px;width:126px;border-left:1px solid #f0f0f0">重叠面积:1550.90</i><i style="left:440px;width:124px;border-left:1px solid #f0f0f0">请手动处理</i></div>
<div class="row" style="top:210px"><i style="left:3px;width:59px">12</i><i style="left:62px;width:126px;border-left:1px solid #f0f0f0">建筑</i><i style="left:188px;width:126px;border-left:1px solid #f0f0f0">建筑基底</i><i style="left:314px;width:126px;border-left:1px solid #f0f0f0">重叠面积:445.23</i><i style="left:440px;width:124px;border-left:1px solid #f0f0f0">请手动处理</i></div>
<div class="row" style="top:227px"><i style="left:3px;width:59px">13</i><i style="left:62px;width:126px;border-left:1px solid #f0f0f0">建筑</i><i style="left:188px;width:126px;border-left:1px solid #f0f0f0">建筑基底</i><i style="left:314px;width:126px;border-left:1px solid #f0f0f0">重叠面积:445.23</i><i style="left:440px;width:124px;border-left:1px solid #f0f0f0">请手动处理</i></div>
<div class="abs" style="left:558px;top:0;width:17px;height:236px;background:#f0f0f0"><svg class="abs" style="left:4px;top:5px" width="10" height="7" viewBox="0 0 10 7"><path d="M1 6 L5 1.5 L9 6" fill="none" stroke="#5a5a5a" stroke-width="1.9"/></svg><div class="abs" style="left:0px;top:17px;width:17px;height:114px;background:#cdcdcd"></div><svg class="abs" style="left:4px;top:224px" width="10" height="7" viewBox="0 0 10 7"><path d="M1 1 L5 5.5 L9 1" fill="none" stroke="#5a5a5a" stroke-width="1.9"/></svg></div>
<div class="abs" style="left:0;top:235px;width:575px;height:17px;background:#f0f0f0"><svg class="abs" style="left:5px;top:4px" width="7" height="10" viewBox="0 0 7 10"><path d="M6 1 L1.5 5 L6 9" fill="none" stroke="#5a5a5a" stroke-width="1.9"/></svg><div class="abs" style="left:17px;top:0px;width:516px;height:16px;background:#cdcdcd"></div><svg class="abs" style="left:546px;top:4px" width="7" height="10" viewBox="0 0 7 10"><path d="M1 1 L5.5 5 L1 9" fill="none" stroke="#5a5a5a" stroke-width="1.9"/></svg></div>
</div></div>
</body>
</html>
